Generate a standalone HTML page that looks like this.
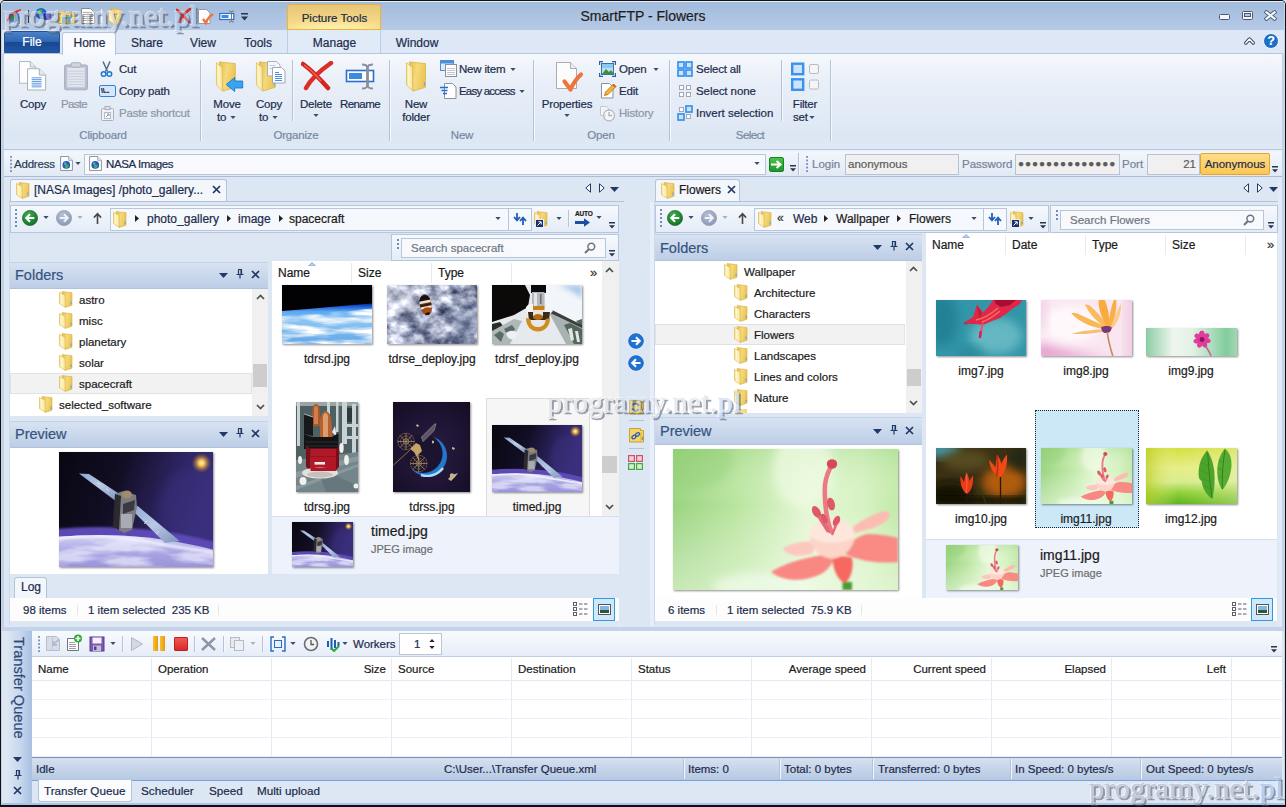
<!DOCTYPE html>
<html><head><meta charset="utf-8"><title>SmartFTP - Flowers</title>
<style>
*{box-sizing:border-box;margin:0;padding:0}
html,body{width:1286px;height:807px;overflow:hidden;background:#dde7f4}
body{font-family:"Liberation Sans",sans-serif;font-size:11.5px;color:#1c2c4c;position:relative;-webkit-text-stroke:.2px}
.k{color:#1a1a1a}
.a{position:absolute}
.t{position:absolute;white-space:nowrap;line-height:16px;height:16px}
.g{color:#8c96a6}
.c{text-align:center}
.r{text-align:right}
.gl{color:#7888a2}
.sep{position:absolute;width:1px;background:#b3c3da;box-shadow:1px 0 0 #f4f8fd}
.hd{position:absolute;background:linear-gradient(#d8e3f2,#bccde6);border-bottom:1px solid #b0c2dc;border-top:1px solid #c3d2e8}
.hd span{position:absolute;left:5px;top:3px;font-size:14.5px;color:#35537f;line-height:18px}
.wm{position:absolute;font-family:"Liberation Serif",serif;font-size:30.300px;line-height:34px;height:40px;padding:0 4px;color:#d6d7dc;-webkit-text-stroke:.4px #d6d7dc;letter-spacing:.2px;white-space:nowrap;filter:url(#wmf)}
.wm span{color:#b4cef2;-webkit-text-stroke:.4px #b4cef2}
.inp{position:absolute;background:#f0f0f0;border:1px solid #b6c2d6}
.tb{position:absolute;background:linear-gradient(#f6f9fd,#e4ecf7);border:1px solid #b7c6dc}
.wh{position:absolute;background:#fff}
.th{position:absolute;box-shadow:1px 1px 2px rgba(0,0,0,.45)}
.col{position:absolute;width:1px;background:#e6ebf3}
</style></head><body>
<svg width="0" height="0" style="position:absolute">
<defs>
<linearGradient id="fg" x1="0" y1="0" x2="1" y2="0"><stop offset="0" stop-color="#f7e08a"/><stop offset=".5" stop-color="#f3d061"/><stop offset="1" stop-color="#e2b33c"/></linearGradient>
<linearGradient id="fb" x1="0" y1="0" x2="1" y2="0"><stop offset="0" stop-color="#fbeeb0"/><stop offset="1" stop-color="#f1d678"/></linearGradient>
<linearGradient id="bf1" x1="0" y1="0" x2="1" y2="0"><stop offset="0" stop-color="#f4d878"/><stop offset=".3" stop-color="#fef6cc"/><stop offset="1" stop-color="#f8e598"/></linearGradient>
<linearGradient id="bf2" x1="0" y1="0" x2="1" y2=".3"><stop offset="0" stop-color="#e6bc48"/><stop offset=".5" stop-color="#f5d97c"/><stop offset="1" stop-color="#ecc656"/></linearGradient>
<symbol id="bfold" viewBox="0 0 21 32"><path d="M3.500 .9L20 2.600V26.900L7.400 30.800z" fill="url(#bf2)" stroke="#d9ad3c" stroke-width=".7"/><path d="M.4 1.700L6.500 6.500 6.900 30.800.5 24.300z" fill="url(#bf1)" stroke="#dcb34a" stroke-width=".7"/><rect x="18.300" y="22" width="1.200" height="3.200" fill="#5aa8ec"/></symbol>
<symbol id="fold" viewBox="0 0 14 17"><path d="M3 .6L13 1.700V14.200L6.300 16.400z" fill="url(#bf2)" stroke="#d9ad3c" stroke-width=".6"/><path d="M.4 1.400L6 4.200 6.300 16.400.5 12.600z" fill="url(#bf1)" stroke="#dcb34a" stroke-width=".6"/><rect x="11.500" y="10.500" width="1.100" height="2.600" fill="#5aa8ec"/></symbol>
<filter id="wmf" x="-2%" y="-10%" width="104%" height="130%" color-interpolation-filters="sRGB"><feOffset in="SourceAlpha" dx="1.500" dy="1.500" result="o"/><feGaussianBlur in="o" stdDeviation=".5" result="ob"/><feComposite in="ob" in2="SourceAlpha" operator="out" result="sh"/><feFlood flood-color="#4a546c" flood-opacity=".55" result="fc"/><feComposite in="fc" in2="sh" operator="in" result="shc"/><feOffset in="SourceAlpha" dx="-1" dy="-1" result="o2"/><feComposite in="o2" in2="SourceAlpha" operator="out" result="hl"/><feFlood flood-color="#ffffff" flood-opacity=".55" result="fw"/><feComposite in="fw" in2="hl" operator="in" result="hlc"/><feColorMatrix in="SourceGraphic" type="matrix" values="1 0 0 0 0 0 1 0 0 0 0 0 1 0 0 0 0 0 .5 0" result="fill"/><feMerge><feMergeNode in="shc"/><feMergeNode in="hlc"/><feMergeNode in="fill"/></feMerge></filter>
<symbol id="dd" viewBox="0 0 7 4"><path d="M0 0h7L3.5 4z" fill="#3b4d6b"/></symbol>
<symbol id="ddg" viewBox="0 0 7 4"><path d="M0 0h7L3.5 4z" fill="#a9b2c2"/></symbol>
<symbol id="ovf" viewBox="0 0 7 8"><path d="M0 0h7v1.6H0zM0 3.6h7L3.5 7.6z" fill="#27374f"/></symbol>
<symbol id="grip" viewBox="0 0 3 18"><g fill="#6b8dc4"><rect x="0" y="0" width="2" height="2"/><rect x="0" y="4" width="2" height="2"/><rect x="0" y="8" width="2" height="2"/><rect x="0" y="12" width="2" height="2"/><rect x="0" y="16" width="2" height="2"/></g></symbol>
<symbol id="pin" viewBox="0 0 8 10"><path d="M2 0.5h4M2.5 0.5v5M5.5 0.5v5M0.5 5.5h7M4 5.5v4" stroke="#1f3a66" stroke-width="1.2" fill="none"/><rect x="4.5" y="1" width="1.4" height="4.5" fill="#1f3a66"/></symbol>
<symbol id="x" viewBox="0 0 9 9"><path d="M1 1l7 7M8 1l-7 7" stroke="#1f3a66" stroke-width="1.7" fill="none"/></symbol>
<symbol id="pdd" viewBox="0 0 9 5"><path d="M0 0h9L4.5 5z" fill="#1f3a66"/></symbol>
<symbol id="sup" viewBox="0 0 9 6"><path d="M1 5l3.5-3.6L8 5" stroke="#505050" stroke-width="1.7" fill="none"/></symbol>
<symbol id="sdn" viewBox="0 0 9 6"><path d="M1 1l3.5 3.6L8 1" stroke="#505050" stroke-width="1.7" fill="none"/></symbol>
<symbol id="bc" viewBox="0 0 4 7"><path d="M0 0l4 3.5L0 7z" fill="#222"/></symbol>
<radialGradient id="gb" cx=".4" cy=".3" r=".8"><stop offset="0" stop-color="#3fae4e"/><stop offset="1" stop-color="#0c6a22"/></radialGradient>
<radialGradient id="gy" cx=".4" cy=".3" r=".8"><stop offset="0" stop-color="#b4bfd6"/><stop offset="1" stop-color="#8893b2"/></radialGradient>
<symbol id="back" viewBox="0 0 16 16"><circle cx="8" cy="8" r="7.6" fill="url(#gb)" stroke="#0b5a1d" stroke-width=".6"/><path d="M12.3 8H4.5M8 4.2L4.2 8 8 11.8" stroke="#fff" stroke-width="2" fill="none"/></symbol>
<symbol id="fwd" viewBox="0 0 16 16"><circle cx="8" cy="8" r="7.6" fill="url(#gy)" stroke="#8490ad" stroke-width=".6"/><path d="M3.7 8h7.8M8 4.2L11.8 8 8 11.8" stroke="#eef1f7" stroke-width="2" fill="none"/></symbol>
<symbol id="up" viewBox="0 0 10 13"><path d="M5 12.5V1.5M1 5.5l4-4.3 4 4.3" stroke="#4a4a4a" stroke-width="1.8" fill="none"/></symbol>
<symbol id="sync" viewBox="0 0 14 12"><path d="M4 0v6.5M1 4l3 3.4L7 4" stroke="#1f5fb8" stroke-width="1.8" fill="none"/><path d="M10 12V5.2M7 8l3-3.4 3 3.4" stroke="#1f5fb8" stroke-width="1.8" fill="none"/></symbol>
<symbol id="mag" viewBox="0 0 12 12"><circle cx="7.3" cy="4.6" r="3.4" fill="none" stroke="#6d7480" stroke-width="1.5"/><path d="M4.8 7.2L1 11" stroke="#6d7480" stroke-width="2"/></symbol>
<symbol id="globe" viewBox="0 0 12 14"><path d="M.5 .5h7.500l3.500 3.500v9.500H.5z" fill="#fff" stroke="#8a8f98" stroke-width=".9"/><path d="M8 .5v3.500h3.500" fill="#eef0f3" stroke="#8a8f98" stroke-width=".7"/><circle cx="5.800" cy="8.300" r="3.600" fill="#2458c0"/><circle cx="4.800" cy="7.200" r="1.300" fill="#7ab0f0" opacity=".7"/><path d="M4.500 9c.8-1.200 2.400-1.600 3.200-.6s-.2 2.600-1.400 2.800-2.400-1-1.800-2.200z" fill="#3fb548"/></symbol>
</defs></svg>

<!-- window frame -->
<div class="a" style="left:0;top:0;width:1286px;height:807px;background:#dde7f4;border:1px solid #101010;border-bottom-width:2px;border-radius:5px 5px 0 0"></div>
<div class="a" style="left:1px;top:1px;width:1284px;height:804px;border:3px solid #c3d3ea;border-top:1px solid #e6eef9;border-bottom:3px solid #a9c4e8;border-radius:4px 4px 0 0"></div>
<!-- title bar -->
<div class="a" style="left:2px;top:2px;width:1282px;height:28px;background:linear-gradient(#a2bbdc,#b6cae6)"></div>
<div class="t c" style="left:543px;top:6px;width:200px;font-size:14px;line-height:20px;height:20px;color:#1e1e1e">SmartFTP - Flowers</div>
<!-- picture tools -->
<div class="a" style="left:287px;top:4px;width:94px;height:26px;background:radial-gradient(ellipse 60% 45% at 50% 100%,#fff3b4,rgba(255,243,180,0) 100%),linear-gradient(#e6c67c,#f5d884 70%,#f9de8c);border:1px solid #f0b431;border-radius:3px 3px 0 0"></div>
<div class="t c" style="left:287px;top:10px;width:95px">Picture Tools</div>
<!-- window buttons -->
<div class="a" style="left:1219px;top:14px;width:11px;height:6px;border:1px solid #4a5870;border-radius:1.500px;background:#f4f7fc"></div>
<div class="a" style="left:1242px;top:11px;width:11px;height:9px;border:1px solid #4a5870;border-radius:1.500px;background:#f4f7fc"></div>
<div class="a" style="left:1244px;top:13px;width:7px;height:4px;border:1px solid #4a5870;background:#b8c8e0"></div>
<svg class="a" style="left:1264px;top:10px" width="13" height="11" viewBox="0 0 13 11"><path d="M2.500 2.300l8 6.400M10.500 2.300l-8 6.400" stroke="#4a5870" stroke-width="4" stroke-linecap="square"/><path d="M2.500 2.300l8 6.400M10.500 2.300l-8 6.400" stroke="#f4f7fc" stroke-width="2.200" stroke-linecap="square"/></svg>

<!-- tab row -->
<div class="a" style="left:2px;top:30px;width:1282px;height:24px;background:#dde7f5"></div>
<div class="a" style="left:287px;top:30px;width:94px;height:23px;background:#e1eaf7;border-left:1px solid #b9cde9;border-right:1px solid #b9cde9"></div>
<div class="a" style="left:4px;top:31px;width:56px;height:22px;background:linear-gradient(#4b82c8,#2f66b2 48%,#1a4790 52%,#2157a8);border:1px solid #234f96;border-radius:3px 3px 0 0"></div>
<div class="t c" style="left:4px;top:34px;width:56px;color:#fff;font-size:12px">File</div>
<div class="a" style="left:62px;top:32px;width:54px;height:23px;background:#f8fafd;border:1px solid #b4c6df;border-bottom:none;border-radius:3px 3px 0 0;z-index:3"></div>
<div class="t c" style="left:62px;top:35px;width:55px;font-size:12px;z-index:4">Home</div>
<div class="t c" style="left:117px;top:35px;width:60px;font-size:12px">Share</div>
<div class="t c" style="left:173px;top:35px;width:60px;font-size:12px">View</div>
<div class="t c" style="left:228px;top:35px;width:60px;font-size:12px">Tools</div>
<div class="t c" style="left:287px;top:35px;width:95px;font-size:12px">Manage</div>
<div class="t c" style="left:382px;top:35px;width:70px;font-size:12px">Window</div>
<!-- help -->
<svg class="a" style="left:1244px;top:36px" width="11" height="9" viewBox="0 0 11 9"><path d="M1.800 7L5.500 3l3.700 4" stroke="#3a4860" stroke-width="3.400" fill="none" stroke-linejoin="round" stroke-linecap="round"/><path d="M1.800 7L5.500 3l3.700 4" stroke="#fff" stroke-width="1.500" fill="none" stroke-linejoin="round" stroke-linecap="round"/></svg>
<div class="a c" style="left:1263px;top:33px;width:16px;height:16px;border-radius:8px;background:#1b6fc8;color:#fff;font-weight:bold;font-size:12.500px;line-height:14px;border:1px solid #f4f8fd;letter-spacing:0">?</div>

<!-- ribbon -->
<div class="a" style="left:3px;top:53px;width:1280px;height:97px;background:linear-gradient(#f5f8fc,#e9eff8 30%,#dde7f4 85%,#dfe8f5);border:1px solid #b4c6df;border-left-color:#c6d4e8;border-right-color:#c6d4e8"></div>
<div style="letter-spacing:-.2px">
<!-- ===== ribbon content ===== -->
<!-- Clipboard -->
<svg class="a" style="left:19px;top:61px" width="28" height="30" viewBox="0 0 31 33"><path d="M.5 .5h12l6 6v18H.5z" fill="#fdfdfe" stroke="#a9b0bc"/><path d="M12.500.5v6h6" fill="#e9edf2" stroke="#a9b0bc"/><path d="M9.500 8.500h13l7 7v16.500h-20z" fill="#fff" stroke="#a1a8b4"/><path d="M22.500 8.500v7h7" fill="#e6eaf0" stroke="#a1a8b4"/><g stroke="#4f8fe0" stroke-width="1"><path d="M14 18.500h11M14 20.500h11M14 22.500h11M14 24.500h11M14 26.500h11M14 28.500h11"/></g></svg>
<div class="t c" style="left:8px;top:96px;width:50px">Copy</div>
<svg class="a" style="left:64px;top:61px" width="24" height="31" viewBox="0 0 27 33"><rect x=".5" y="3.500" width="26" height="28" rx="2" fill="#b7bdd0" stroke="#a3aac0"/><rect x="3.500" y="6.500" width="20" height="22" fill="#e3e7ef" stroke="#c9cfdb"/><rect x="8" y="1" width="11" height="5" rx="1.500" fill="#cfd4e0" stroke="#a3aac0"/><g stroke="#c3c9d6"><path d="M5 10.500h17M5 13.500h17M5 16.500h17M5 19.500h17M5 22.500h17M5 25.500h17"/></g></svg>
<div class="t c g" style="left:49px;top:96px;width:50px;letter-spacing:-.7px">Paste</div>
<svg class="a" style="left:100px;top:61px" width="13" height="17" viewBox="0 0 13 17"><path d="M3 0.500l4.500 10M10 0.500L5.500 10.500" stroke="#5a6a80" stroke-width="1.5" fill="none"/><circle cx="3.600" cy="13" r="2.300" fill="none" stroke="#1e78d2" stroke-width="1.500"/><circle cx="9.400" cy="13" r="2.300" fill="none" stroke="#1e78d2" stroke-width="1.500"/></svg>
<div class="t" style="left:119px;top:61px">Cut</div>
<div class="a" style="left:99px;top:85px;width:17px;height:12px;background:#d4e7fb;border:1.500px solid #2f83d8;border-radius:2px"></div>
<div class="a" style="left:101px;top:86px;font-size:7px;font-weight:bold;line-height:10px;color:#223;letter-spacing:-.3px">\\...</div>
<div class="t" style="left:119px;top:83px">Copy path</div>
<svg class="a" style="left:101px;top:106px" width="13" height="15" viewBox="0 0 13 15"><rect x=".5" y="2.500" width="12" height="12" rx="1" fill="#eef0f4" stroke="#a9b0bd"/><rect x="4" y=".5" width="5" height="3" fill="#dfe3ea" stroke="#a9b0bd"/><rect x="3.500" y="6.500" width="6" height="6" fill="#fff" stroke="#b4bac6"/><path d="M5 11l3-3M6 8h2v2" stroke="#8f97a7" fill="none"/></svg>
<div class="t g" style="left:119px;top:105px">Paste shortcut</div>
<div class="t c gl" style="left:53px;top:127px;width:100px">Clipboard</div>
<div class="sep" style="left:200px;top:60px;height:81px"></div>

<!-- Organize -->
<svg class="a" style="left:215px;top:60px" width="30" height="33" viewBox="0 0 30 33"><use href="#bfold" x=".8" y="1" width="20.500" height="31.300"/><path d="M27.700 21h-8v-3.500L11.200 24.500l8.500 7V28h8z" fill="#38a4f0" stroke="#1878cc" stroke-width=".9" stroke-linejoin="round"/></svg>
<div class="t c" style="left:202px;top:96px;width:50px">Move</div>
<div class="t" style="left:217px;top:109px">to</div>
<svg class="a" style="left:230px;top:116px" width="6" height="3"><use href="#dd" width="6" height="3"/></svg>
<svg class="a" style="left:255px;top:60px" width="32" height="33" viewBox="0 0 32 33"><use href="#bfold" x=".8" y="1" width="20.500" height="31.300"/><path d="M12.500 1.500h9l3.500 3.500v11h-12.500z" fill="#f6f7f9" stroke="#a9b0bc"/><path d="M14.500 5.500h6M14.500 8.500h3" stroke="#b9cbe6"/><path d="M17.500 7.500h9l3.500 3.500v12h-12.500z" fill="#fff" stroke="#a1a8b4"/><g stroke="#4f8fe0"><path d="M20 12.500h4M20 14.500h7M20 16.500h7M20 18.500h7M20 20.500h7"/></g></svg>
<div class="t c" style="left:244px;top:96px;width:50px">Copy</div>
<div class="t" style="left:259px;top:109px">to</div>
<svg class="a" style="left:272px;top:116px" width="6" height="3"><use href="#dd" width="6" height="3"/></svg>
<div class="sep" style="left:292px;top:60px;height:61px"></div>
<svg class="a" style="left:301px;top:61px" width="33" height="30" viewBox="0 0 33 30"><path d="M2 3c7 5 17 15 25 24" stroke="#d5261c" stroke-width="4.500" stroke-linecap="round" fill="none"/><path d="M30 2C20 9 10 18 5 27" stroke="#dc2e22" stroke-width="4.500" stroke-linecap="round" fill="none"/><path d="M3 4c6 4 12 10 17 16" stroke="#f0685c" stroke-width="1.200" fill="none"/></svg>
<div class="t c" style="left:291px;top:96px;width:50px">Delete</div>
<svg class="a" style="left:313px;top:114px" width="6" height="3"><use href="#dd" width="6" height="3"/></svg>
<svg class="a" style="left:345px;top:63px" width="31" height="27" viewBox="0 0 31 27"><rect x="1.500" y="7.500" width="27" height="11" fill="#fff" stroke="#2a6fc9" stroke-width="1.600"/><rect x="4" y="10" width="13" height="6" fill="#3c8be0"/><path d="M17 1.500c3 0 5 .5 5 2.500v19c0 2-2 2.500-5 2.500M28 1.500c-3 0-5 .5-5 2.500v19c0 2 2 2.500 5 2.500" stroke="#8a8f98" stroke-width="1.800" fill="none"/></svg>
<div class="t c" style="left:335px;top:96px;width:50px;letter-spacing:-.6px">Rename</div>
<div class="t c gl" style="left:246px;top:127px;width:100px">Organize</div>
<div class="sep" style="left:389px;top:60px;height:81px"></div>

<!-- New -->
<svg class="a" style="left:406px;top:61px" width="21" height="32"><use href="#bfold" width="20.500" height="31.300"/></svg>
<div class="t c" style="left:391px;top:96px;width:50px">New</div>
<div class="t c" style="left:391px;top:109px;width:50px">folder</div>
<svg class="a" style="left:440px;top:60px" width="17" height="17" viewBox="0 0 17 17"><rect x=".5" y=".5" width="13" height="10" fill="#dbe9f8" stroke="#4b8edb"/><rect x="1" y="1" width="12" height="2.500" fill="#4b8edb"/><rect x="5.500" y="4.500" width="11" height="12" fill="#fff" stroke="#8a8f98"/><path d="M7 8.500h8M7 10.500h8M7 12.500h8M7 14.500h8" stroke="#c0c5ce"/></svg>
<div class="t" style="left:459px;top:61px">New item</div>
<svg class="a" style="left:510px;top:68px" width="6" height="3"><use href="#dd" width="6" height="3"/></svg>
<svg class="a" style="left:440px;top:82px" width="17" height="17" viewBox="0 0 17 17"><path d="M4.500 1.500h8l3.500 3.500v11.500h-11.500z" fill="#fff" stroke="#8a8f98"/><path d="M0 5.500h8M1.500 8.500h6M3 11.500h4" stroke="#1f6fd0" stroke-width="1.400"/></svg>
<div class="t" style="left:459px;top:83px;letter-spacing:-.8px">Easy access</div>
<svg class="a" style="left:519px;top:90px" width="6" height="3"><use href="#dd" width="6" height="3"/></svg>
<div class="t c gl" style="left:412px;top:127px;width:100px">New</div>
<div class="sep" style="left:533px;top:60px;height:81px"></div>

<!-- Open -->
<svg class="a" style="left:555px;top:61px" width="30" height="33" viewBox="0 0 30 33"><path d="M1.500 1.500h14l6 6v20h-20z" fill="#fcfcfd" stroke="#a9adb5"/><path d="M15.500 1.500v6h6" fill="#eceef2" stroke="#a9adb5"/><path d="M9.500 20.500l6 8c2.500-6 6-11 10.500-15" stroke="#f0733a" stroke-width="4.200" fill="none" stroke-linecap="round" stroke-linejoin="round"/></svg>
<div class="t c" style="left:537px;top:96px;width:60px">Properties</div>
<svg class="a" style="left:564px;top:114px" width="6" height="3"><use href="#dd" width="6" height="3"/></svg>
<svg class="a" style="left:599px;top:61px" width="17" height="16" viewBox="0 0 17 16"><rect x="2.500" y="2.500" width="12" height="11" fill="#bfe0f2" stroke="#3b6fb0"/><path d="M3 13l4-5 3 3 2-2 3 4z" fill="#3f8f3a"/><rect x="3" y="3" width="11" height="4" fill="#8cc8f0"/><path d="M.5 4V.5H4M13 .5h3.500V4M16.500 12v3.500H13M4 15.500H.5V12" stroke="#2d5fa8" fill="none" stroke-width="1.400"/></svg>
<div class="t" style="left:619px;top:61px">Open</div>
<svg class="a" style="left:653px;top:68px" width="6" height="3"><use href="#dd" width="6" height="3"/></svg>
<svg class="a" style="left:600px;top:82px" width="17" height="17" viewBox="0 0 17 17"><path d="M1.500 1.500h8l3.500 3.500v11h-11.500z" fill="#fff" stroke="#8a8f98"/><path d="M4.500 13.500l1-3.500L13.500 2l2.500 2.500-8 8z" fill="#f3b43a" stroke="#a86c14" stroke-width=".8"/><path d="M12.500 3l2.500 2.500 1-1L13.500 2z" fill="#e0453a"/></svg>
<div class="t" style="left:619px;top:83px">Edit</div>
<svg class="a" style="left:599px;top:105px" width="17" height="17" viewBox="0 0 17 17"><path d="M1.500 1.500h6l2 2v7h-8z" fill="#f2f4f7" stroke="#c2c7d0"/><circle cx="10" cy="10.500" r="5.500" fill="#f4f6f9" stroke="#b3b9c6" stroke-width="1.300"/><path d="M10 7v3.500h3" stroke="#aab1bf" stroke-width="1.300" fill="none"/><path d="M3 10l2 3 2-3" fill="#c5cad5"/></svg>
<div class="t g" style="left:619px;top:105px">History</div>
<div class="t c gl" style="left:551px;top:127px;width:100px">Open</div>
<div class="sep" style="left:669px;top:60px;height:81px"></div>

<!-- Select -->
<svg class="a" style="left:677px;top:61px" width="16" height="16" viewBox="0 0 16 16"><g fill="#cde3fb" stroke="#3a92ee" stroke-width="1.700"><rect x="1" y="1" width="6" height="6"/><rect x="9" y="1" width="6" height="6"/><rect x="1" y="9" width="6" height="6"/><rect x="9" y="9" width="6" height="6"/></g></svg>
<div class="t" style="left:696px;top:61px">Select all</div>
<svg class="a" style="left:677px;top:83px" width="16" height="16" viewBox="0 0 16 16"><g fill="#fdfdfd" stroke="#a3a8b2" stroke-width="1"><rect x="2.500" y="2.500" width="4" height="4"/><rect x="9.500" y="2.500" width="4" height="4"/><rect x="2.500" y="9.500" width="4" height="4"/><rect x="9.500" y="9.500" width="4" height="4"/></g></svg>
<div class="t" style="left:696px;top:83px;letter-spacing:-.08px">Select none</div>
<svg class="a" style="left:677px;top:105px" width="16" height="16" viewBox="0 0 16 16"><g fill="#fdfdfd" stroke="#a3a8b2" stroke-width="1"><rect x="2.500" y="2.500" width="4" height="4"/><rect x="9.500" y="9.500" width="4" height="4"/></g><g fill="#cde3fb" stroke="#3a92ee" stroke-width="1.700"><rect x="9" y="1" width="6" height="6"/><rect x="1" y="9" width="6" height="6"/></g></svg>
<div class="t" style="left:696px;top:105px;letter-spacing:0">Invert selection</div>
<div class="t c gl" style="left:700px;top:127px;width:100px;letter-spacing:-.6px">Select</div>
<div class="sep" style="left:781px;top:60px;height:61px"></div>

<!-- Filter set -->
<svg class="a" style="left:790px;top:61px" width="30" height="32" viewBox="0 0 30 32"><g fill="#cde3fb" stroke="#3a92ee" stroke-width="2.400"><rect x="2.200" y="2.700" width="11" height="10.500"/><rect x="2.200" y="18.300" width="11" height="10.500"/></g><g fill="#f4f5f7" stroke="#b7bbc4" stroke-width="1"><rect x="19.500" y="3.500" width="9" height="9" rx="1.500"/><rect x="19.500" y="19" width="9" height="9" rx="1.500"/></g></svg>
<div class="t c" style="left:780px;top:96px;width:50px">Filter</div>
<div class="t" style="left:793px;top:109px">set</div>
<svg class="a" style="left:809px;top:116px" width="6" height="3"><use href="#dd" width="6" height="3"/></svg>
<div class="sep" style="left:830px;top:60px;height:81px"></div>
</div>
<!-- ===== address bar ===== -->
<div class="a" style="left:4px;top:150px;width:1278px;height:27px;background:linear-gradient(#f3f7fc,#e1e9f5);border-top:2px solid #eef3fa;border-bottom:1px solid #a9bbd6"></div>
<div class="sep" style="left:798px;top:153px;height:22px"></div>
<svg class="a" style="left:10px;top:156px" width="3" height="16"><use href="#grip" width="3" height="16"/></svg>
<div class="t" style="left:14px;top:156px;color:#2b3b55;letter-spacing:-.2px">Address</div>

<svg class="a" style="left:60px;top:156px" width="13" height="15"><use href="#globe" width="13" height="15"/></svg>
<svg class="a" style="left:75px;top:162px" width="6" height="3"><use href="#dd" width="6" height="3"/></svg>
<div class="a" style="left:84px;top:154px;width:682px;height:21px;background:#f7f9fc;border:1px solid #b9c6da"></div>
<svg class="a" style="left:89px;top:156px" width="13" height="15"><use href="#globe" width="13" height="15"/></svg>
<div class="t" style="left:106px;top:156px;letter-spacing:-.4px">NASA Images</div>
<svg class="a" style="left:754px;top:162px" width="6" height="3"><use href="#dd" width="6" height="3"/></svg>
<div class="a" style="left:769px;top:157px;width:15px;height:15px;background:linear-gradient(#4cc04a,#1c9a2b);border:1px solid #178222;border-radius:2px"></div>
<svg class="a" style="left:771px;top:160px" width="11" height="9" viewBox="0 0 11 9"><path d="M0 4.500h8M5.500 1L9.500 4.500 5.500 8" stroke="#fff" stroke-width="2" fill="none"/></svg>
<svg class="a" style="left:790px;top:165px" width="6" height="7"><use href="#ovf" width="6" height="7"/></svg>
<!-- login bar -->

<svg class="a" style="left:806px;top:156px" width="3" height="16"><use href="#grip" width="3" height="16"/></svg>
<div class="t g" style="left:812px;top:156px;color:#76839a">Login</div>
<div class="inp" style="left:845px;top:154px;width:114px;height:21px"></div>
<div class="t" style="left:848px;top:156px;color:#5c5c5c">anonymous</div>
<div class="t g" style="left:962px;top:156px;color:#76839a">Password</div>
<div class="inp" style="left:1015px;top:154px;width:105px;height:21px"></div>
<div class="t" style="left:1018px;top:156px;color:#5c5c5c;font-size:10px;letter-spacing:.98px">●●●●●●●●●●●●●●</div>
<div class="t g" style="left:1122px;top:156px;color:#76839a">Port</div>
<div class="inp" style="left:1147px;top:154px;width:53px;height:21px"></div>
<div class="t r" style="left:1147px;top:156px;width:49px;color:#5c5c5c">21</div>
<div class="a" style="left:1200px;top:153px;width:70px;height:22px;background:linear-gradient(#fddc8a,#fbc754);border:1px solid #e6a52a;border-radius:2px"></div>
<div class="t c" style="left:1200px;top:156px;width:70px">Anonymous</div>
<svg class="a" style="left:1272px;top:166px" width="6" height="7"><use href="#ovf" width="6" height="7"/></svg>

<!-- ===== doc tabs ===== -->
<div class="a" style="left:10px;top:179px;width:217px;height:23px;background:#f3f6fb;border:1px solid #b5c3d8;border-bottom:none;border-radius:3px 3px 0 0"></div>
<svg class="a" style="left:16px;top:182px" width="14" height="17"><use href="#fold" width="14" height="17"/></svg>
<div class="t" style="left:34px;top:182px;font-size:12px">[NASA Images] /photo_gallery...</div>
<svg class="a" style="left:212px;top:185px" width="9" height="9"><use href="#x" width="9" height="9"/></svg>
<svg class="a" style="left:585px;top:183px" width="6" height="10" viewBox="0 0 6 10"><path d="M5.500 .8v8.400L.8 5z" fill="#fff" stroke="#1f3a66" stroke-width="1"/></svg>
<svg class="a" style="left:599px;top:183px" width="6" height="10" viewBox="0 0 6 10"><path d="M.5 .8v8.400L5.200 5z" fill="#fff" stroke="#1f3a66" stroke-width="1"/></svg>
<svg class="a" style="left:610px;top:187px" width="9" height="5"><use href="#pdd" width="9" height="5"/></svg>
<div class="a" style="left:655px;top:179px;width:85px;height:23px;background:#f3f6fb;border:1px solid #b5c3d8;border-bottom:none;border-radius:3px 3px 0 0"></div>
<svg class="a" style="left:661px;top:182px" width="14" height="17"><use href="#fold" width="14" height="17"/></svg>
<div class="t k" style="left:679px;top:182px;font-size:12px">Flowers</div>
<svg class="a" style="left:727px;top:185px" width="9" height="9"><use href="#x" width="9" height="9"/></svg>
<svg class="a" style="left:1243px;top:183px" width="6" height="10" viewBox="0 0 6 10"><path d="M5.500 .8v8.400L.8 5z" fill="#fff" stroke="#1f3a66" stroke-width="1"/></svg>
<svg class="a" style="left:1257px;top:183px" width="6" height="10" viewBox="0 0 6 10"><path d="M.5 .8v8.400L5.200 5z" fill="#fff" stroke="#1f3a66" stroke-width="1"/></svg>
<svg class="a" style="left:1269px;top:187px" width="9" height="5"><use href="#pdd" width="9" height="5"/></svg>

<!-- ===== left pane ===== -->
<div class="a" style="left:619px;top:202px;width:4px;height:424px;background:#e6eef9"></div><div class="a" style="left:650px;top:202px;width:4px;height:424px;background:#e6eef9"></div>
<div class="a" style="left:9px;top:201px;width:615px;height:424px;background:#dde7f4;border-top:1px solid #b5c3d8;border-left:1px solid #cdd9ea"></div>
<!-- toolbar -->
<div class="tb" style="left:10px;top:205px;width:609px;height:28px"></div>
<svg class="a" style="left:15px;top:209px" width="3" height="18"><use href="#grip" width="3" height="18"/></svg>
<svg class="a" style="left:22px;top:210px" width="16" height="16"><use href="#back" width="16" height="16"/></svg>
<svg class="a" style="left:43px;top:216px" width="6" height="3"><use href="#dd" width="6" height="3"/></svg>
<svg class="a" style="left:56px;top:210px" width="16" height="16"><use href="#fwd" width="16" height="16"/></svg>
<svg class="a" style="left:77px;top:216px" width="6" height="3"><use href="#ddg" width="6" height="3"/></svg>
<svg class="a" style="left:93px;top:212px" width="9" height="13"><use href="#up" width="9" height="13"/></svg>
<div class="a" style="left:110px;top:208px;width:399px;height:23px;background:#f5f8fc;border:1px solid #b9c6da"></div>
<svg class="a" style="left:113px;top:211px" width="14" height="17"><use href="#fold" width="14" height="17"/></svg>
<svg class="a" style="left:135px;top:215px" width="4" height="7"><use href="#bc" width="4" height="7"/></svg>
<div class="t" style="left:147px;top:211px;font-size:12px">photo_gallery</div>
<svg class="a" style="left:227px;top:215px" width="4" height="7"><use href="#bc" width="4" height="7"/></svg>
<div class="t" style="left:238px;top:211px;font-size:12px">image</div>
<svg class="a" style="left:279px;top:215px" width="4" height="7"><use href="#bc" width="4" height="7"/></svg>
<div class="t k" style="left:289px;top:211px;font-size:12px">spacecraft</div>
<svg class="a" style="left:495px;top:217px" width="6" height="3"><use href="#dd" width="6" height="3"/></svg>
<div class="a" style="left:508px;top:208px;width:24px;height:23px;background:#f5f8fc;border:1px solid #b9c6da"></div>
<svg class="a" style="left:513px;top:213px" width="14" height="12"><use href="#sync" width="14" height="12"/></svg>
<svg class="a" style="left:534px;top:211px" width="14" height="17"><use href="#fold" width="14" height="17"/></svg>
<div class="a" style="left:535px;top:219px;width:9px;height:9px;background:#1d2f6a;border:1px solid #e8ecf5"></div>
<svg class="a" style="left:537px;top:221px" width="5" height="5" viewBox="0 0 5 5"><path d="M.5 4.500L4 1M1.500 .8H4.200V3.500" stroke="#fff" fill="none"/></svg>
<svg class="a" style="left:556px;top:217px" width="6" height="3"><use href="#dd" width="6" height="3"/></svg>
<div class="sep" style="left:568px;top:210px;height:17px"></div>
<div class="a" style="left:575px;top:210px;font-size:6.500px;font-weight:bold;line-height:8px;color:#222;letter-spacing:-.2px">AUTO</div>
<svg class="a" style="left:575px;top:218px" width="16" height="9" viewBox="0 0 16 9"><path d="M0 3h9V.3L15 4.500 9 8.700V6H0z" fill="#1d4fa0"/></svg>
<svg class="a" style="left:596px;top:216px" width="6" height="3"><use href="#dd" width="6" height="3"/></svg>
<svg class="a" style="left:609px;top:222px" width="6" height="7"><use href="#ovf" width="6" height="7"/></svg>
<!-- search row -->
<div class="tb" style="left:391px;top:234px;width:228px;height:27px"></div>
<svg class="a" style="left:397px;top:239px" width="3" height="10"><use href="#grip" width="3" height="18"/></svg>
<div class="a" style="left:401px;top:238px;width:205px;height:20px;background:#f7f9fc;border:1px solid #b9c6da"></div>
<div class="t" style="left:411px;top:240px;color:#6e7684">Search spacecraft</div>
<svg class="a" style="left:584px;top:242px" width="12" height="12"><use href="#mag" width="12" height="12"/></svg>
<svg class="a" style="left:609px;top:250px" width="6" height="7"><use href="#ovf" width="6" height="7"/></svg>

<!-- folders panel (left) -->
<div class="hd" style="left:10px;top:262px;width:258px;height:27px"><span>Folders</span></div>
<svg class="a" style="left:219px;top:273px" width="9" height="5"><use href="#pdd" width="9" height="5"/></svg>
<svg class="a" style="left:236px;top:269px" width="8" height="10"><use href="#pin" width="8" height="10"/></svg>
<svg class="a" style="left:251px;top:270px" width="9" height="9"><use href="#x" width="9" height="9"/></svg>
<div class="wh" style="left:10px;top:289px;width:258px;height:127px"></div>
<div class="a" style="left:10px;top:373px;width:242px;height:21px;background:#f2f2f2;border:1px solid #e2e2e2"></div>
<svg class="a" style="left:59px;top:291px" width="14" height="17"><use href="#fold" width="14" height="17"/></svg><div class="t k" style="left:79px;top:292px">astro</div>
<svg class="a" style="left:59px;top:312px" width="14" height="17"><use href="#fold" width="14" height="17"/></svg><div class="t k" style="left:79px;top:313px">misc</div>
<svg class="a" style="left:59px;top:333px" width="14" height="17"><use href="#fold" width="14" height="17"/></svg><div class="t k" style="left:79px;top:334px">planetary</div>
<svg class="a" style="left:59px;top:354px" width="14" height="17"><use href="#fold" width="14" height="17"/></svg><div class="t k" style="left:79px;top:355px">solar</div>
<svg class="a" style="left:59px;top:375px" width="14" height="17"><use href="#fold" width="14" height="17"/></svg><div class="t k" style="left:79px;top:376px">spacecraft</div>
<svg class="a" style="left:39px;top:396px" width="14" height="17"><use href="#fold" width="14" height="17"/></svg><div class="t k" style="left:59px;top:397px">selected_software</div>
<div class="a" style="left:252px;top:289px;width:16px;height:127px;background:#f0f0f0"></div>
<svg class="a" style="left:256px;top:294px" width="9" height="6"><use href="#sup" width="9" height="6"/></svg>
<div class="a" style="left:253px;top:364px;width:14px;height:23px;background:#cdcdcd"></div>
<svg class="a" style="left:256px;top:404px" width="9" height="6"><use href="#sdn" width="9" height="6"/></svg>

<!-- preview panel (left) -->
<div class="hd" style="left:10px;top:421px;width:258px;height:27px"><span>Preview</span></div>
<svg class="a" style="left:219px;top:432px" width="9" height="5"><use href="#pdd" width="9" height="5"/></svg>
<svg class="a" style="left:236px;top:428px" width="8" height="10"><use href="#pin" width="8" height="10"/></svg>
<svg class="a" style="left:251px;top:429px" width="9" height="9"><use href="#x" width="9" height="9"/></svg>
<div class="wh" style="left:10px;top:448px;width:258px;height:126px"></div>
<!-- ===== image symbols ===== -->
<svg width="0" height="0" style="position:absolute"><defs>
<filter id="b0" x="-10%" y="-10%" width="120%" height="120%"><feGaussianBlur stdDeviation=".6"/></filter>
<filter id="cl1" x="0" y="0" width="100%" height="100%" color-interpolation-filters="sRGB"><feTurbulence type="fractalNoise" baseFrequency=".06 .08" numOctaves="4" seed="7"/><feColorMatrix type="matrix" values="1.600 0 0 0 -.17  1.550 0 0 0 -.12  1.400 0 0 0 .05  0 0 0 0 1"/></filter>
<filter id="cl2" x="0" y="0" width="100%" height="100%" color-interpolation-filters="sRGB"><feTurbulence type="fractalNoise" baseFrequency=".025 .16" numOctaves="3" seed="4"/><feColorMatrix type="matrix" values="0 0 0 0 1  0 0 0 0 1  0 0 0 0 1  2.800 0 0 0 -.95"/></filter>
<filter id="cl3" x="0" y="0" width="100%" height="100%" color-interpolation-filters="sRGB"><feTurbulence type="fractalNoise" baseFrequency=".022 .09" numOctaves="3" seed="11"/><feColorMatrix type="matrix" values="0 0 0 0 .96  0 0 0 0 .96  0 0 0 0 1  3.200 0 0 0 -1.150"/></filter>
<filter id="b1" x="-10%" y="-10%" width="120%" height="120%"><feGaussianBlur stdDeviation="1.200"/></filter>
<filter id="b2" x="-10%" y="-10%" width="120%" height="120%"><feGaussianBlur stdDeviation="2.500"/></filter>
<filter id="b4" x="-20%" y="-20%" width="140%" height="140%"><feGaussianBlur stdDeviation="5"/></filter>
<linearGradient id="tmbg" x1="0" y1="0" x2="1" y2=".25"><stop offset="0" stop-color="#0a0712"/><stop offset=".42" stop-color="#120e24"/><stop offset=".75" stop-color="#2c2460"/><stop offset="1" stop-color="#382e78"/></linearGradient>
<radialGradient id="tmsun"><stop offset="0" stop-color="#fff7c8"/><stop offset=".3" stop-color="#f4c050"/><stop offset="1" stop-color="#a0602a" stop-opacity="0"/></radialGradient>
<linearGradient id="tmearth" x1="0" y1="0" x2="0" y2="1"><stop offset="0" stop-color="#d0d0f4"/><stop offset=".06" stop-color="#a8a4e2"/><stop offset=".18" stop-color="#847cd0"/><stop offset="1" stop-color="#7068bc"/></linearGradient>
<linearGradient id="tmpan" x1="0" y1="0" x2="1" y2="1"><stop offset="0" stop-color="#8fa8d0"/><stop offset=".5" stop-color="#b8c8e4"/><stop offset="1" stop-color="#7e94be"/></linearGradient>
<symbol id="timed" viewBox="0 0 154 115" preserveAspectRatio="none">
<rect width="154" height="115" fill="url(#tmbg)"/>
<ellipse cx="140" cy="55" rx="40" ry="40" fill="#3c3284" opacity=".4" filter="url(#b4)"/>
<circle cx="142.500" cy="11" r="10" fill="url(#tmsun)"/>
<ellipse cx="40" cy="232" rx="272" ry="157" fill="#5c4ab4" filter="url(#b1)"/>
<ellipse cx="40" cy="232" rx="262" ry="149" fill="url(#tmearth)"/>
<clipPath id="cpe"><ellipse cx="40" cy="232" rx="262" ry="149"/></clipPath><g clip-path="url(#cpe)"><rect x="0" y="80" width="154" height="35" filter="url(#cl3)" opacity=".62"/><path d="M0 86c30-4 60-2 90 4s50 8 64 10" stroke="#f2f2fe" stroke-width="3" fill="none" filter="url(#b1)" opacity=".85"/></g>
<path d="M20 21.500l10 .5 29 19-3 7.500z" fill="url(#tmpan)"/>
<path d="M70 55l8.700-1 42 35-14.700 2z" fill="url(#tmpan)"/>
<path d="M38 30.500l3 2M47 36.500l3 2.500M88 69l-3 3M100 79l-3 3" stroke="#e8eef8" stroke-width=".8"/>
<path d="M56 42l8-3 13 4 1 12-5 23-8 3-9-5 1-20z" fill="#7c7a82"/>
<path d="M56 42l6 2-2 34-6-3 1-20z" fill="#2c2a30"/>
<path d="M64 52l12-4-1 10-11 4z" fill="#3a3840"/>
<ellipse cx="68" cy="42.500" rx="5" ry="4" fill="#a08c68"/>
<rect x="62" y="62" width="11" height="14" fill="#aaaab4"/>
</symbol>

<linearGradient id="e1" x1="0" y1="0" x2="0" y2="1"><stop offset="0" stop-color="#0a2a90"/><stop offset=".08" stop-color="#1c5fd8"/><stop offset=".2" stop-color="#5aa8f0"/><stop offset=".45" stop-color="#8cc4f2"/><stop offset="1" stop-color="#62a6e6"/></linearGradient>
<symbol id="tdrsd" viewBox="0 0 90 59" preserveAspectRatio="none">
<rect width="90" height="59" fill="#020204"/>
<path d="M0 26C30 24 60 20.500 90 18.500V59H0z" fill="url(#e1)"/>
<clipPath id="cpd"><path d="M0 31C30 29 60 25.500 90 23.500V59H0z"/></clipPath>
<g clip-path="url(#cpd)"><rect width="90" height="59" filter="url(#cl2)"/></g>
</symbol>

<symbol id="tdrse" viewBox="0 0 90 59" preserveAspectRatio="none">
<rect width="90" height="59" fill="#8c9dba" filter="url(#cl1)"/>
<ellipse cx="14" cy="14" rx="18" ry="14" fill="#fff" opacity=".35" filter="url(#b4)"/>
<ellipse cx="78" cy="36" rx="14" ry="18" fill="#243860" opacity=".35" filter="url(#b4)"/>
<g transform="rotate(-12 38.700 19.700)"><ellipse cx="38.700" cy="19.700" rx="5.800" ry="10.500" fill="#6a3010"/><path d="M33 16a5.800 7 0 0 1 11.400 0z" fill="#18120e"/><rect x="33" y="15.500" width="11.400" height="2.600" fill="#e8e4dc"/><rect x="33" y="19.200" width="11.400" height="1.600" fill="#2a1a10"/><rect x="33.200" y="21.500" width="11" height="2.200" fill="#f0e8dc"/><ellipse cx="38.700" cy="26" rx="4.500" ry="3.500" fill="#a84c14"/><ellipse cx="38.700" cy="29" rx="2.500" ry="1.300" fill="#20120a"/></g>
</symbol>

<symbol id="tdrsf" viewBox="0 0 90 59" preserveAspectRatio="none">
<rect width="90" height="59" fill="#e6e9ee"/>
<path d="M52 0h38v42L54 24z" fill="#f2f5f9"/>
<path d="M66 0h24v14c-6-6-14-10-24-14z" fill="#a9c8ea" filter="url(#b2)"/>
<path d="M0 0h33l5 10-2 12-14 8L0 37z" fill="#0c0a08"/>
<path d="M0 39l8-2 4 5-12 9z" fill="#2a2e22"/>
<path d="M0 46l22-12 8 2-12 23H0z" fill="#aeb8b8"/>
<path d="M2 50l6-4 4 3-3 8zM12 44l8-4 3 4-6 9z" fill="#5c6c64"/>
<path d="M14 48c4-3 8-3 12 0l-3 6c-4 1-8 0-9-6z" fill="#eef0f2"/>
<path d="M56 26l10 6 24 10v17H74z" fill="#a8b2b0"/>
<path d="M72 40l6-2 12 6v15h-8zM84 36l6-2v8z" fill="#54665c"/>
<path d="M76 44l4-1 2 12-3 1zM83 46l3 0 2 11-3 0z" fill="#dfe6e4"/>
<path d="M54 22l36 18v3L56 27z" fill="#3a3e3a"/>
<rect x="39" y="0" width="15" height="8" fill="#0a0a0a"/>
<rect x="40" y="7" width="12.500" height="14.500" fill="#b4b8bc"/><rect x="42" y="8" width="3" height="13" fill="#e4e6e8"/><rect x="48" y="9" width="1.500" height="10" fill="#6c7074"/>
<rect x="40" y="21" width="12.500" height="4" fill="#c8821a"/>
<path d="M34 22c2-3 5-4 7-3v8l-6 3zM53 20c3 0 6 2 8 6l-4 4-4-3z" fill="#f4f4f4"/>
<path d="M36 27h22l-1 8H37z" fill="#3a2a1a"/><rect x="41" y="26" width="10" height="5" fill="#e8e4dc"/><ellipse cx="46" cy="32" rx="5" ry="3" fill="#b46c14"/>
<path d="M34 33c0 8 5 13.500 12 13.500S58 41 58 33l-4.500 1c0 5-3 8-7.500 8s-7.500-3-7.500-8z" fill="#d08c1c"/>
<path d="M39.500 36c1 3 3.500 5 6.500 5s5.500-2 6.500-5" stroke="#e8e6e2" stroke-width="2" fill="none"/>
</symbol>

<symbol id="tdrsg" viewBox="0 0 62 90" preserveAspectRatio="none">
<rect width="62" height="90" fill="#4e6062"/>
<rect x="0" y="0" width="62" height="4" fill="#9aa6a6"/>
<g fill="#c9d2d4"><rect x="1" y="0" width="3" height="44"/><rect x="31" y="0" width="3" height="12"/><rect x="46" y="0" width="5" height="42"/><rect x="40" y="0" width="2.500" height="30"/><rect x="56" y="2" width="4" height="60"/><path d="M46 22h16v3H46zM50 34h12v3H50z"/></g>
<rect x="51" y="6" width="5" height="14" fill="#2c3a3c"/>
<path d="M0 58l62-8v40H0z" fill="#74868a"/>
<path d="M0 70l62-16v5L0 76zM0 84l62-22v3L0 88z" fill="#8e9ea2" opacity=".8"/>
<path d="M20 64l42 20v6H30z" fill="#5e7074" opacity=".6"/>
<path d="M16 10c0-10 8-11 8 0l1 14h-9z" fill="#a8562a"/><path d="M18 6c1-3 3-3 4 0v16h-4z" fill="#cc8050"/>
<path d="M24 22c0-17 11.500-17 11.500 0l1 15H24z" fill="#b4622e"/><path d="M27 14c1-4 4-4 5 0v22h-5z" fill="#dc9c70"/>
<path d="M8 12l9 3v19l-9-2z" fill="#16181a"/><path d="M8 12l9 3" stroke="#c8ccd0" stroke-width=".8"/>
<path d="M36 30l3-6 2 12z" fill="#e8e8e8"/>
<path d="M8 32l8 3h20l6.500-4v16H8z" fill="#141416"/><path d="M9 40h33M9 44h33" stroke="#3c3c40" stroke-width=".6"/>
<path d="M14.500 46.500H40v22H14.500z" fill="#b01828"/><path d="M10 44l4.500 2.500v22L10 65zM40 46.500l3-2v20l-3 4z" fill="#7c0e1c"/>
<path d="M14.500 54.500H40" stroke="#8c1020" stroke-width=".7"/>
<rect x="18.500" y="60" width="10.500" height="2.600" fill="#f4e8e8"/>
<ellipse cx="24" cy="71" rx="18" ry="5.500" fill="#e4e0dc"/><path d="M14.500 66h25.500v3H14.500z" fill="#b01828"/>
<ellipse cx="24" cy="72.500" rx="13" ry="3" fill="#c4c0bc"/>
<g fill="#f0f0ec"><ellipse cx="45.500" cy="46" rx="2.200" ry="5"/><ellipse cx="50.500" cy="58" rx="2.400" ry="5"/><ellipse cx="7" cy="79" rx="3.500" ry="4"/><ellipse cx="4" cy="58" rx="2" ry="4"/><circle cx="60" cy="84" r="2.500"/></g>
</symbol>

<radialGradient id="ssbg" cx=".5" cy=".55" r=".7"><stop offset="0" stop-color="#2a1c44"/><stop offset="1" stop-color="#150e26"/></radialGradient>
<symbol id="tdrss" viewBox="0 0 77 90" preserveAspectRatio="none">
<rect width="77" height="90" fill="url(#ssbg)"/>
<circle cx="34" cy="54" r="20" fill="#2478cc"/>
<path d="M50 66A20 20 0 0 1 28 73" stroke="#a8dcf8" stroke-width="2.600" fill="none" filter="url(#b0)"/>
<circle cx="30.300" cy="51.600" r="19.300" fill="#1b1330"/>
<g stroke="#b89860" fill="none" stroke-width=".7"><circle cx="13" cy="39.500" r="8.200" stroke-dasharray="1.200 .8"/><circle cx="13" cy="39.500" r="5.500" stroke-dasharray="1 .9"/><circle cx="13" cy="39.500" r="2.800"/><path d="M13 31v17M4.500 39.500h17M7 33.500l12 12M19 33.500l-12 12"/>
<circle cx="25.700" cy="61.500" r="8.200" stroke-dasharray="1.200 .8"/><circle cx="25.700" cy="61.500" r="5.500" stroke-dasharray="1 .9"/><circle cx="25.700" cy="61.500" r="2.800"/><path d="M25.700 53v17M17.200 61.500h17M19.700 55.500l12 12M31.700 55.500l-12 12"/>
<path d="M.5 63L17 48M28 36L42.500 22"/></g>
<path d="M28.500 35L41 22.500l2-.7-2 7-11 11z" fill="#5c5468" stroke="#a89c88" stroke-width=".5"/>
<path d="M17 47l6-6 4 2 2 6-5 5-3-4z" fill="#c4a468"/><path d="M22 50l4 8" stroke="#c4a468" stroke-width="1.200"/>
<g fill="#c8b48c"><path d="M24 22l2 1.500-1 1.500-2-1zM39 38.500l2 .5 0 2-2 .5zM59 45l3 1-1 2-2-1z"/><path d="M55 77l4-4 6-2-3 4-4 4z"/><circle cx="59" cy="73.500" r="2.200"/></g>
</symbol>
</defs></svg>

<!-- ===== left file list ===== -->
<div class="wh" style="left:272px;top:261px;width:347px;height:255px"></div>
<div class="col" style="left:351px;top:263px;height:20px"></div>
<div class="col" style="left:431px;top:263px;height:20px"></div>
<div class="col" style="left:511px;top:263px;height:20px"></div>
<div class="t k" style="left:278px;top:265px;font-size:12px">Name</div>
<svg class="a" style="left:308px;top:262px" width="8" height="4" viewBox="0 0 8 4"><path d="M.5 3.800L4 .6 7.500 3.800z" fill="#bcd2ee" stroke="#7a9cd0" stroke-width=".8"/></svg>
<div class="t k" style="left:358px;top:265px;font-size:12px">Size</div>
<div class="t k" style="left:438px;top:265px;font-size:12px">Type</div>
<div class="t" style="left:590px;top:265px;color:#333;font-size:13px">»</div>
<div class="a" style="left:602px;top:261px;width:17px;height:255px;background:#f0f0f0"></div>
<svg class="a" style="left:605px;top:267px" width="9" height="6"><use href="#sup" width="9" height="6"/></svg>
<div class="a" style="left:602px;top:456px;width:15px;height:17px;background:#cdcdcd"></div>
<svg class="a" style="left:605px;top:504px" width="9" height="6"><use href="#sdn" width="9" height="6"/></svg>
<svg class="th" style="left:282px;top:285px" width="90" height="59"><use href="#tdrsd" width="90" height="59"/></svg>
<svg class="th" style="left:387px;top:285px" width="90" height="59"><use href="#tdrse" width="90" height="59"/></svg>
<svg class="th" style="left:492px;top:285px" width="90" height="59"><use href="#tdrsf" width="90" height="59"/></svg>
<div class="t c k" style="left:277px;top:351px;width:100px;font-size:12px">tdrsd.jpg</div>
<div class="t c k" style="left:382px;top:351px;width:100px;font-size:12px">tdrse_deploy.jpg</div>
<div class="t c k" style="left:487px;top:351px;width:100px;font-size:12px">tdrsf_deploy.jpg</div>
<div class="a" style="left:486px;top:398px;width:104px;height:119px;background:#f6f6f6;border:1px solid #dcdcdc"></div>
<svg class="th" style="left:296px;top:402px" width="62" height="90"><use href="#tdrsg" width="62" height="90"/></svg>
<svg class="th" style="left:393px;top:402px" width="77" height="90"><use href="#tdrss" width="77" height="90"/></svg>
<svg class="th" style="left:492px;top:425px" width="90" height="67"><use href="#timed" width="90" height="67"/></svg>
<div class="t c k" style="left:277px;top:499px;width:100px;font-size:12px">tdrsg.jpg</div>
<div class="t c k" style="left:382px;top:499px;width:100px;font-size:12px">tdrss.jpg</div>
<div class="t c k" style="left:487px;top:499px;width:100px;font-size:12px">timed.jpg</div>
<!-- details -->
<div class="a" style="left:272px;top:516px;width:347px;height:58px;background:#eef2fb;border-top:1px solid #d3deef"></div>
<svg class="th" style="left:292px;top:522px" width="61" height="45"><use href="#timed" width="61" height="45"/></svg>
<div class="t k" style="left:371px;top:522px;font-size:14px;line-height:18px;height:18px">timed.jpg</div>
<div class="t" style="left:371px;top:541px;font-size:11px;color:#6d6d6d">JPEG image</div>
<!-- preview image left -->
<svg class="th" style="left:59px;top:452px" width="154" height="115"><use href="#timed" width="154" height="115"/></svg>
<!-- log tab + status -->
<div class="a" style="left:14px;top:577px;width:33px;height:22px;background:#f3f6fb;border:1px solid #b5c3d8;border-bottom:none;border-radius:3px 3px 0 0"></div>
<div class="t" style="left:21px;top:579px;font-size:12px">Log</div>
<div class="wh" style="left:10px;top:598px;width:609px;height:23px;background:#fdfdfe"></div>
<div class="t" style="left:23px;top:602px">98 items</div>
<div class="col" style="left:77px;top:605px;height:10px;background:#e3e6ec"></div>
<div class="t" style="left:88px;top:602px">1 item selected&nbsp; 235 KB</div>
<div class="col" style="left:218px;top:605px;height:10px;background:#e3e6ec"></div>
<svg class="a" style="left:573px;top:602px" width="16" height="14" viewBox="0 0 16 14"><g fill="none" stroke="#5a5f6a" stroke-width="1"><rect x=".5" y=".5" width="3" height="3"/><rect x=".5" y="5.500" width="3" height="3"/><rect x=".5" y="10.500" width="3" height="3"/><path d="M6 2h9M6 7h9M6 12h9" stroke-dasharray="3.500 1.500"/></g></svg>
<div class="a" style="left:593px;top:598px;width:22px;height:23px;background:#cfe8fa;border:1px solid #2f9ae0"></div>
<div class="a" style="left:598px;top:604px;width:13px;height:11px;background:#fff;border:1px solid #555"></div>
<div class="a" style="left:600px;top:606px;width:9px;height:7px;background:linear-gradient(#7fb8e8 50%,#2a5a30 50%)"></div>
<!-- ===== middle strip ===== -->
<svg class="a" style="left:628px;top:333px" width="16" height="16" viewBox="0 0 16 16"><circle cx="8" cy="8" r="7.300" fill="#1d72d6" stroke="#1458b4" stroke-width=".8"/><path d="M3.500 8h8M8 4.200L11.800 8 8 11.800" stroke="#fff" stroke-width="2" fill="none"/></svg>
<svg class="a" style="left:628px;top:355px" width="16" height="16" viewBox="0 0 16 16"><circle cx="8" cy="8" r="7.300" fill="#1d72d6" stroke="#1458b4" stroke-width=".8"/><path d="M12.500 8h-8M8 4.200L4.200 8 8 11.800" stroke="#fff" stroke-width="2" fill="none"/></svg>
<svg class="a" style="left:629px;top:399px" width="16" height="16" viewBox="0 0 16 16"><path d="M.5 1.500h11v2h3v11.500H.5z" fill="#f3d568" stroke="#c9a030"/><path d="M12 5.500v8" stroke="#e2b840" stroke-width="1.500"/><rect x="13" y="10" width="1.200" height="3" fill="#4a98e8"/><path d="M3.500 6.500c1-2.500 5-2.500 6 0M9.500 10c-1 2.500-5 2.500-6 0" stroke="#1f5fd0" stroke-width="1.700" fill="none"/><path d="M8 7.500l2.500-.5-.5-2.500zM5 9l-2.500.5.500 2.500z" fill="#1f5fd0"/></svg>
<div class="a" style="left:629px;top:420px;width:15px;height:1px;background:#b3c3da"></div>
<svg class="a" style="left:629px;top:427px" width="16" height="16" viewBox="0 0 16 16"><path d="M.5 1.500h11v2h3v11.500H.5z" fill="#f3d568" stroke="#c9a030"/><path d="M12 5.500v8" stroke="#e2b840" stroke-width="1.500"/><rect x="13" y="10" width="1.200" height="3" fill="#4a98e8"/><ellipse cx="5" cy="10" rx="2.200" ry="1.600" transform="rotate(-35 5 10)" fill="none" stroke="#2a5ab8" stroke-width="1.300"/><ellipse cx="8.500" cy="7.500" rx="2.200" ry="1.600" transform="rotate(-35 8.500 7.500)" fill="none" stroke="#2a5ab8" stroke-width="1.300"/></svg>
<div class="a" style="left:629px;top:448px;width:15px;height:1px;background:#b3c3da"></div>
<svg class="a" style="left:628px;top:455px" width="15" height="15" viewBox="0 0 15 15"><g stroke-width="1.200"><rect x=".6" y=".6" width="5.800" height="5.800" fill="#f6d0d8" stroke="#d0506c"/><rect x="8.600" y=".6" width="5.800" height="5.800" fill="#f6d0d8" stroke="#d0506c"/><rect x=".6" y="8.600" width="5.800" height="5.800" fill="#d4f0d0" stroke="#44a83c"/><rect x="8.600" y="8.600" width="5.800" height="5.800" fill="#d4f0d0" stroke="#44a83c"/></g></svg>

<!-- ===== right pane ===== -->
<div class="a" style="left:654px;top:201px;width:628px;height:424px;background:#dde7f4;border-top:1px solid #b5c3d8;border-left:1px solid #cdd9ea"></div>
<div class="a" style="left:1278px;top:178px;width:4px;height:448px;background:#e2eaf6"></div>
<div class="tb" style="left:655px;top:205px;width:394px;height:28px"></div>
<div class="tb" style="left:1050px;top:205px;width:228px;height:28px"></div>
<svg class="a" style="left:660px;top:209px" width="3" height="18"><use href="#grip" width="3" height="18"/></svg>
<svg class="a" style="left:667px;top:210px" width="16" height="16"><use href="#back" width="16" height="16"/></svg>
<svg class="a" style="left:688px;top:216px" width="6" height="3"><use href="#dd" width="6" height="3"/></svg>
<svg class="a" style="left:701px;top:210px" width="16" height="16"><use href="#fwd" width="16" height="16"/></svg>
<svg class="a" style="left:722px;top:216px" width="6" height="3"><use href="#ddg" width="6" height="3"/></svg>
<svg class="a" style="left:738px;top:212px" width="9" height="13"><use href="#up" width="9" height="13"/></svg>
<div class="a" style="left:754px;top:208px;width:230px;height:23px;background:#f5f8fc;border:1px solid #b9c6da"></div>
<svg class="a" style="left:758px;top:211px" width="14" height="17"><use href="#fold" width="14" height="17"/></svg>
<div class="t" style="left:777px;top:210px;font-size:12px;color:#333">«</div>
<div class="t" style="left:793px;top:211px;font-size:12px">Web</div>
<svg class="a" style="left:824px;top:215px" width="4" height="7"><use href="#bc" width="4" height="7"/></svg>
<div class="t k" style="left:836px;top:211px;font-size:12px">Wallpaper</div>
<svg class="a" style="left:897px;top:215px" width="4" height="7"><use href="#bc" width="4" height="7"/></svg>
<div class="t k" style="left:909px;top:211px;font-size:12px">Flowers</div>
<svg class="a" style="left:971px;top:217px" width="6" height="3"><use href="#dd" width="6" height="3"/></svg>
<div class="a" style="left:983px;top:208px;width:24px;height:23px;background:#f5f8fc;border:1px solid #b9c6da"></div>
<svg class="a" style="left:988px;top:213px" width="14" height="12"><use href="#sync" width="14" height="12"/></svg>
<svg class="a" style="left:1010px;top:211px" width="14" height="17"><use href="#fold" width="14" height="17"/></svg>
<div class="a" style="left:1011px;top:219px;width:9px;height:9px;background:#1d2f6a;border:1px solid #e8ecf5"></div>
<svg class="a" style="left:1013px;top:221px" width="5" height="5" viewBox="0 0 5 5"><path d="M.5 4.500L4 1M1.500 .8H4.200V3.500" stroke="#fff" fill="none"/></svg>
<svg class="a" style="left:1028px;top:217px" width="6" height="3"><use href="#dd" width="6" height="3"/></svg>
<svg class="a" style="left:1040px;top:222px" width="6" height="7"><use href="#ovf" width="6" height="7"/></svg>
<svg class="a" style="left:1056px;top:210px" width="3" height="10"><use href="#grip" width="3" height="18"/></svg>
<div class="a" style="left:1060px;top:210px;width:204px;height:20px;background:#f7f9fc;border:1px solid #b9c6da"></div>
<div class="t" style="left:1070px;top:212px;color:#6e7684">Search Flowers</div>
<svg class="a" style="left:1243px;top:214px" width="12" height="12"><use href="#mag" width="12" height="12"/></svg>
<svg class="a" style="left:1268px;top:222px" width="6" height="7"><use href="#ovf" width="6" height="7"/></svg>

<!-- folders (right) -->
<div class="hd" style="left:655px;top:234px;width:267px;height:27px"><span style="top:4px">Folders</span></div>
<svg class="a" style="left:873px;top:245px" width="9" height="5"><use href="#pdd" width="9" height="5"/></svg>
<svg class="a" style="left:890px;top:241px" width="8" height="10"><use href="#pin" width="8" height="10"/></svg>
<svg class="a" style="left:905px;top:242px" width="9" height="9"><use href="#x" width="9" height="9"/></svg>
<div class="wh" style="left:655px;top:261px;width:267px;height:152px"></div>
<div class="a" style="left:655px;top:324px;width:250px;height:21px;background:#f2f2f2;border:1px solid #e2e2e2"></div>
<svg class="a" style="left:724px;top:263px" width="14" height="17"><use href="#fold" width="14" height="17"/></svg><div class="t k" style="left:744px;top:264px">Wallpaper</div>
<svg class="a" style="left:734px;top:284px" width="14" height="17"><use href="#fold" width="14" height="17"/></svg><div class="t k" style="left:754px;top:285px">Architecture</div>
<svg class="a" style="left:734px;top:305px" width="14" height="17"><use href="#fold" width="14" height="17"/></svg><div class="t k" style="left:754px;top:306px">Characters</div>
<svg class="a" style="left:734px;top:326px" width="14" height="17"><use href="#fold" width="14" height="17"/></svg><div class="t k" style="left:754px;top:327px">Flowers</div>
<svg class="a" style="left:734px;top:347px" width="14" height="17"><use href="#fold" width="14" height="17"/></svg><div class="t k" style="left:754px;top:348px">Landscapes</div>
<svg class="a" style="left:734px;top:368px" width="14" height="17"><use href="#fold" width="14" height="17"/></svg><div class="t k" style="left:754px;top:369px">Lines and colors</div>
<svg class="a" style="left:734px;top:389px" width="14" height="17"><use href="#fold" width="14" height="17"/></svg><div class="t k" style="left:754px;top:390px">Nature</div>
<div class="a" style="left:735px;top:409px;width:12px;height:4px;background:linear-gradient(90deg,#fbeeb0,#f1d678)"></div>
<div class="a" style="left:906px;top:261px;width:16px;height:152px;background:#f0f0f0"></div>
<svg class="a" style="left:909px;top:266px" width="9" height="6"><use href="#sup" width="9" height="6"/></svg>
<div class="a" style="left:907px;top:369px;width:14px;height:17px;background:#cdcdcd"></div>
<svg class="a" style="left:909px;top:400px" width="9" height="6"><use href="#sdn" width="9" height="6"/></svg>
<!-- preview (right) -->
<div class="hd" style="left:655px;top:417px;width:267px;height:28px"><span style="top:4px">Preview</span></div>
<svg class="a" style="left:873px;top:429px" width="9" height="5"><use href="#pdd" width="9" height="5"/></svg>
<svg class="a" style="left:890px;top:425px" width="8" height="10"><use href="#pin" width="8" height="10"/></svg>
<svg class="a" style="left:905px;top:426px" width="9" height="9"><use href="#x" width="9" height="9"/></svg>
<div class="wh" style="left:655px;top:445px;width:267px;height:153px"></div>
<!-- ===== flower symbols ===== -->
<svg width="0" height="0" style="position:absolute"><defs>
<linearGradient id="f11bg" x1="0" y1="0" x2="1" y2="0"><stop offset="0" stop-color="#9ad480"/><stop offset=".3" stop-color="#bce6a2"/><stop offset=".6" stop-color="#e4f7d4"/><stop offset=".85" stop-color="#d6f2c2"/><stop offset="1" stop-color="#c2eaa8"/></linearGradient>
<linearGradient id="f11v" x1="0" y1="0" x2="0" y2="1"><stop offset="0" stop-color="#8ccc70" stop-opacity=".25"/><stop offset=".4" stop-color="#fff" stop-opacity="0"/><stop offset="1" stop-color="#f4fcec" stop-opacity=".5"/></linearGradient>
<symbol id="img11" viewBox="0 0 225 141" preserveAspectRatio="none">
<rect width="225" height="141" fill="url(#f11bg)"/><rect width="225" height="141" fill="url(#f11v)"/>
<ellipse cx="20" cy="10" rx="40" ry="30" fill="#8ccc70" opacity=".35" filter="url(#b4)"/>
<ellipse cx="130" cy="20" rx="30" ry="40" fill="#f0fbe4" opacity=".7" filter="url(#b4)"/>
<ellipse cx="90" cy="138" rx="50" ry="14" fill="#eefbe8" opacity=".8" filter="url(#b4)"/>
<g filter="url(#b1)">
<path d="M180 78c10-8 24-15 33-16 4 0 5 5 1 9-8 7-22 11-34 13z" fill="#fcbcb2"/>
<path d="M110 100c4-5 18-8 32-8l-2 12c-12 5-26 3-30-4z" fill="#fcc8be"/>
<path d="M98 123c12-8 36-16 62-18 2 6-2 14-12 20-16 8-38 8-50-2z" fill="#f98882"/>
<path d="M170 104c6-10 14-17 24-19 12 0 22 2 31 4v24c-18 2-40-1-55-9z" fill="#f98a84"/>
<path d="M160 108c6-2 14-1 19 1 2 10-1 20-7 26-8-5-13-16-12-27z" fill="#f66860"/>
<ellipse cx="159" cy="87" rx="23" ry="17" fill="#fde6dc"/>
<path d="M137 88c2 14 10 20 22 22 12-2 20-8 23-22-14 8-32 8-45 0z" fill="#fcd4c8"/>
<rect x="169.500" y="133" width="9.500" height="8" fill="#4c9a30"/>
</g>
<g filter="url(#b0)">
<path d="M158 82c-4-10-7-28-6-46 1-8 3-14 7-20" stroke="#ea7a86" stroke-width="4.600" fill="none" stroke-linecap="round"/>
<ellipse cx="159" cy="15" rx="5.200" ry="4.800" fill="#d6485a"/>
<ellipse cx="158" cy="55" rx="3.800" ry="6.500" fill="#e05866" transform="rotate(-15 158 55)"/>
<ellipse cx="143.500" cy="63" rx="3.800" ry="6.500" fill="#e05866" transform="rotate(-30 143.500 63)"/>
<ellipse cx="151" cy="70" rx="3.200" ry="5.500" fill="#e05866" transform="rotate(-20 151 70)"/>
<ellipse cx="163.500" cy="72" rx="3.200" ry="5.500" fill="#e05866" transform="rotate(25 163.500 72)"/>
<path d="M145 67l10 16M152 74l5 10M163 76l-4 10" stroke="#e46a74" stroke-width="2.400"/>
</g></symbol>

<radialGradient id="f7bg" cx=".7" cy=".6" r=".9"><stop offset="0" stop-color="#5cbcc6"/><stop offset=".6" stop-color="#36a0b0"/><stop offset="1" stop-color="#2a8494"/></radialGradient>
<symbol id="img7" viewBox="0 0 90 56" preserveAspectRatio="none">
<rect width="90" height="56" fill="#3296a8"/>
<ellipse cx="60" cy="36" rx="26" ry="18" fill="#74c2cc" opacity=".75" filter="url(#b4)"/>
<ellipse cx="6" cy="20" rx="16" ry="26" fill="#1f7a8e" opacity=".7" filter="url(#b4)"/>
<ellipse cx="34" cy="54" rx="14" ry="8" fill="#2a8496" opacity=".6" filter="url(#b4)"/>
<g filter="url(#b0)"><path d="M29 22l8-5 4-12.500 6 8 6-6.500 4-6h29l-2 4-8 5-6 5-6 4-8 3-9 4-7-1-6 0z" fill="#e0284a"/>
<path d="M58 0h22l-6 5-9 2-5-3z" fill="#a81030"/><path d="M41 5l5 8-3 6z" fill="#c41a40"/>
<path d="M40 20c6-1 14-5 22-12M46 22c6-2 12-6 18-11" stroke="#f4705c" stroke-width="1.600" fill="none"/>
<path d="M30 21.500l-3 2.500 5 .5z" fill="#d01c48"/>
<path d="M46.500 24c-.6 4-1.600 8-2.300 12" stroke="#f0506c" stroke-width="2" fill="none" stroke-linecap="round"/><path d="M44.600 32l-.6 5" stroke="#dc1c54" stroke-width="2.400" stroke-linecap="round"/></g>
</symbol>

<radialGradient id="f8bg" cx=".45" cy=".55" r=".8"><stop offset="0" stop-color="#fdf4f9"/><stop offset=".6" stop-color="#f8e2ee"/><stop offset="1" stop-color="#eeb8d6"/></radialGradient>
<symbol id="img8" viewBox="0 0 90 56" preserveAspectRatio="none">
<rect width="90" height="56" fill="#f9e6f1"/>
<ellipse cx="30" cy="24" rx="30" ry="18" fill="#fffbfd" opacity=".9" filter="url(#b4)"/>
<path d="M-5 60V42c22 8 46 12 78 16z" fill="#df88c2" opacity=".75" filter="url(#b4)"/>
<rect x="84" y="-10" width="16" height="76" fill="#f0c4de" opacity=".8" filter="url(#b4)"/>
<rect x="-10" y="-10" width="16" height="40" fill="#f4d0e6" opacity=".8" filter="url(#b4)"/>
<g filter="url(#b0)"><path d="M63.500 29c-11-1-25-6-33.500-15.500 2-1.500 6-.5 10 2 9 4 18 8 25 12z" fill="#f9b24a" opacity=".92"/><path d="M64.500 28c-8-5-17-14-21-23.500 3-.5 6 1.500 9 5 6 6 11 12 14 17z" fill="#fab650" opacity=".92"/><path d="M65.500 27c-5-8-9-18-8.500-27h6c3.500 8 5 18 4.500 26.500z" fill="#f9a834" opacity=".95"/><path d="M67 27c0-9 2-19 5-27h2.500c.5 9-1.500 19-5.500 27.500z" fill="#f8aa3a" opacity=".92"/><path d="M68.500 28c3-8 6.500-17 10.500-24.500 1 9-3 19-9 25.500z" fill="#fbc470" opacity=".8"/><path d="M62.500 29.500c-10 0-22 1-32.500 4.300 11 .8 23-.3 33-2.300z" fill="#f7b460" opacity=".85"/>
<path d="M59.500 27.500c2-2 8.500-2 10.500 0-.5 3.500-2 5.500-5.500 5.500s-4.500-2-5-5.500z" fill="#7c3878"/><path d="M65.500 32c1 8 3 16 5.500 24" stroke="#c08c5c" stroke-width="1.600" fill="none"/></g>
</symbol>

<linearGradient id="f9bg" x1="0" y1="0" x2="1" y2="0"><stop offset="0" stop-color="#8ccca4"/><stop offset=".3" stop-color="#eef6ee"/><stop offset=".5" stop-color="#e4f2e6"/><stop offset=".75" stop-color="#a4dab8"/><stop offset=".88" stop-color="#82cc9c"/><stop offset="1" stop-color="#a0d8b4"/></linearGradient>
<symbol id="img9" viewBox="0 0 90 28" preserveAspectRatio="none">
<rect width="90" height="28" fill="url(#f9bg)"/>
<g filter="url(#b0)"><path d="M57.500 16c2.500 3.500 5 7.500 7 12" stroke="#c46c90" stroke-width="1.700" fill="none"/><ellipse cx="55.400" cy="7" rx="2.600" ry="4.200" transform="rotate(0 55.400 11.500)" fill="#e23a9e"/><ellipse cx="55.400" cy="7" rx="2.600" ry="4.200" transform="rotate(51 55.400 11.500)" fill="#e23a9e"/><ellipse cx="55.400" cy="7" rx="2.600" ry="4.200" transform="rotate(102 55.400 11.500)" fill="#e23a9e"/><ellipse cx="55.400" cy="7" rx="2.600" ry="4.200" transform="rotate(153 55.400 11.500)" fill="#e23a9e"/><ellipse cx="55.400" cy="7" rx="2.600" ry="4.200" transform="rotate(204 55.400 11.500)" fill="#e23a9e"/><ellipse cx="55.400" cy="7" rx="2.600" ry="4.200" transform="rotate(255 55.400 11.500)" fill="#e23a9e"/><ellipse cx="55.400" cy="7" rx="2.600" ry="4.200" transform="rotate(306 55.400 11.500)" fill="#e23a9e"/><ellipse cx="55.400" cy="7" rx="2.600" ry="4.200" transform="rotate(357 55.400 11.500)" fill="#e23a9e"/><circle cx="55.400" cy="11.500" r="2.400" fill="#8c1858"/></g>
</symbol>

<radialGradient id="f10a" cx=".78" cy=".6" r=".5"><stop offset="0" stop-color="#b8600c"/><stop offset=".6" stop-color="#70400c" stop-opacity=".7"/><stop offset="1" stop-color="#3a2408" stop-opacity="0"/></radialGradient>
<symbol id="img10" viewBox="0 0 90 56" preserveAspectRatio="none">
<rect width="90" height="56" fill="#3a3014"/>
<ellipse cx="6" cy="2" rx="18" ry="8" fill="#4a98a8" filter="url(#b4)"/>
<ellipse cx="30" cy="12" rx="24" ry="10" fill="#5c5020" opacity=".9" filter="url(#b4)"/>
<ellipse cx="68" cy="34" rx="22" ry="16" fill="#b05c0c" filter="url(#b4)"/>
<ellipse cx="84" cy="10" rx="10" ry="12" fill="#1c2814" opacity=".8" filter="url(#b4)"/>
<ellipse cx="14" cy="46" rx="22" ry="12" fill="#100c06" opacity=".85" filter="url(#b4)"/>
<rect y="48" width="90" height="8" fill="#0c0804" opacity=".7" filter="url(#b2)"/>
<g filter="url(#b0)"><path d="M64.500 29v27M30.500 45v11" stroke="#2a1408" stroke-width="1.300"/><path d="M42 38c3 5 6 11 8 18" stroke="#2c3818" stroke-width="1.200" fill="none"/>
<path d="M53 12c3 3 5 5 6.500 8 .5-5 1-9 1.500-13.500 2 3 3.500 6 4.500 9.500 1.500-4 3-7 5.500-9.500.5 9-1 18-7 22.500-6-2-10-9-11-17z" fill="#f04a18"/><path d="M61 8c1 7 1 14-.5 20" stroke="#c82808" stroke-width="1.500" fill="none"/>
<path d="M24.500 28c1.500 2 2.500 4 3.500 6 .5-3 1.500-7 2.500-10 1.500 3 2.500 6 3 9 1-2 2-4 3.500-5.500.5 8-1 15-6 18.500-5-3-7-10-6.500-18z" fill="#e83a14"/><path d="M30.500 26c.8 6 .6 13-.4 19" stroke="#f86038" stroke-width="1.200" fill="none"/></g>
</symbol>

<linearGradient id="f12bg" x1="0" y1="0" x2="0" y2="1"><stop offset="0" stop-color="#d4e040"/><stop offset=".35" stop-color="#e6ee88"/><stop offset=".6" stop-color="#d8ec90"/><stop offset=".8" stop-color="#8ed038"/><stop offset="1" stop-color="#5cb41c"/></linearGradient>
<linearGradient id="f12h" x1="0" y1="0" x2="1" y2="0"><stop offset="0" stop-color="#b8cc20" stop-opacity=".7"/><stop offset=".35" stop-color="#f0f2a0" stop-opacity="0"/><stop offset="1" stop-color="#e8f0c0" stop-opacity=".4"/></linearGradient>
<symbol id="img12" viewBox="0 0 90 56" preserveAspectRatio="none">
<rect width="90" height="56" fill="url(#f12bg)"/><rect width="90" height="56" fill="url(#f12h)"/>
<g filter="url(#b0)"><path d="M61 2c-6 6-9 14-9 24 0 4 1 6 3 7 1 8 5 14 10.500 18 2-8 3-18 2-28-1-8-3-15-7.500-21z" fill="#4ea42c"/><path d="M78 .5c-5 6-8 15-7.500 25 .3 7 2 12 5 16.500 5-6 8-14 9-23 .6-7-1-14-6.500-18.500z" fill="#56ac30"/>
<path d="M61 4c1 16 2 32 4.500 46M78 2c-2 13-3 27-2.500 39" stroke="#2c7c1c" stroke-width=".9" fill="none"/>
<path d="M55 14l7 4M54 22l8 4M55 30l8 4M58 38l6 3M72 12l5 3M71 20l5.500 3M72 28l4.500 2" stroke="#3c9024" stroke-width=".7"/></g>
</symbol>
</defs></svg>

<!-- right preview image -->
<svg class="th" style="left:673px;top:449px" width="225" height="141"><use href="#img11" width="225" height="141"/></svg>

<!-- ===== right file list ===== -->
<div class="wh" style="left:926px;top:233px;width:351px;height:307px"></div>
<div class="col" style="left:1005px;top:235px;height:20px"></div>
<div class="col" style="left:1085px;top:235px;height:20px"></div>
<div class="col" style="left:1165px;top:235px;height:20px"></div>
<div class="col" style="left:1245px;top:235px;height:20px"></div>
<div class="t k" style="left:932px;top:237px;font-size:12px">Name</div>
<svg class="a" style="left:962px;top:234px" width="8" height="4" viewBox="0 0 8 4"><path d="M.5 3.800L4 .6 7.500 3.800z" fill="#bcd2ee" stroke="#7a9cd0" stroke-width=".8"/></svg>
<div class="t k" style="left:1012px;top:237px;font-size:12px">Date</div>
<div class="t k" style="left:1092px;top:237px;font-size:12px">Type</div>
<div class="t k" style="left:1172px;top:237px;font-size:12px">Size</div>
<div class="t" style="left:1267px;top:237px;color:#333;font-size:13px">»</div>
<svg class="th" style="left:936px;top:300px" width="90" height="56"><use href="#img7" width="90" height="56"/></svg>
<svg class="th" style="left:1041px;top:300px" width="91" height="56"><use href="#img8" width="91" height="56"/></svg>
<svg class="th" style="left:1146px;top:328px" width="91" height="28"><use href="#img9" width="91" height="28"/></svg>
<div class="t c k" style="left:931px;top:363px;width:100px;font-size:12px">img7.jpg</div>
<div class="t c k" style="left:1036px;top:363px;width:100px;font-size:12px">img8.jpg</div>
<div class="t c k" style="left:1141px;top:363px;width:100px;font-size:12px">img9.jpg</div>
<div class="a" style="left:1035px;top:410px;width:104px;height:118px;background:#cce8f7;border:1px dotted #10243c"></div>
<svg class="th" style="left:936px;top:448px" width="90" height="56"><use href="#img10" width="90" height="56"/></svg>
<svg class="th" style="left:1041px;top:448px" width="91" height="56"><use href="#img11" width="91" height="56"/></svg>
<svg class="th" style="left:1146px;top:448px" width="91" height="56"><use href="#img12" width="91" height="56"/></svg>
<div class="t c k" style="left:931px;top:511px;width:100px;font-size:12px">img10.jpg</div>
<div class="t c k" style="left:1036px;top:511px;width:100px;font-size:12px">img11.jpg</div>
<div class="t c k" style="left:1141px;top:511px;width:100px;font-size:12px">img12.jpg</div>
<div class="a" style="left:926px;top:539px;width:351px;height:59px;background:#eef2fb;border-top:1px solid #d3deef"></div>
<svg class="th" style="left:946px;top:545px" width="72" height="45"><use href="#img11" width="72" height="45"/></svg>
<div class="t k" style="left:1040px;top:546px;font-size:14px;line-height:18px;height:18px">img11.jpg</div>
<div class="t" style="left:1040px;top:565px;font-size:11px;color:#6d6d6d">JPEG image</div>
<!-- right status -->
<div class="wh" style="left:655px;top:598px;width:622px;height:23px;background:#fdfdfe"></div>
<div class="t" style="left:668px;top:602px">6 items</div>
<div class="col" style="left:716px;top:605px;height:10px;background:#e3e6ec"></div>
<div class="t" style="left:727px;top:602px">1 item selected&nbsp; 75.9 KB</div>
<div class="col" style="left:861px;top:605px;height:10px;background:#e3e6ec"></div>
<svg class="a" style="left:1232px;top:602px" width="16" height="14" viewBox="0 0 16 14"><g fill="none" stroke="#5a5f6a" stroke-width="1"><rect x=".5" y=".5" width="3" height="3"/><rect x=".5" y="5.500" width="3" height="3"/><rect x=".5" y="10.500" width="3" height="3"/><path d="M6 2h9M6 7h9M6 12h9" stroke-dasharray="3.500 1.500"/></g></svg>
<div class="a" style="left:1251px;top:598px;width:22px;height:23px;background:#cfe8fa;border:1px solid #2f9ae0"></div>
<div class="a" style="left:1256px;top:604px;width:13px;height:11px;background:#fff;border:1px solid #555"></div>
<div class="a" style="left:1258px;top:606px;width:9px;height:7px;background:linear-gradient(#7fb8e8 50%,#2a5a30 50%)"></div>
<!-- ===== bottom transfer queue ===== -->
<div class="a" style="left:2px;top:627px;width:1282px;height:176px;background:#dde7f4;border-top:4px solid #c3d3ea"></div>
<div class="a" style="left:4px;top:631px;width:28px;height:172px;background:linear-gradient(90deg,#dde7f4 10%,#c9d8ee 55%,#a9c0e2)"></div>
<div class="a" style="left:28px;top:637px;font-size:14.600px;color:#2b4a78;writing-mode:vertical-rl;line-height:18px;width:18px;white-space:nowrap;transform:translateX(-18px)">Transfer Queue</div>
<svg class="a" style="left:13px;top:757px" width="9" height="5"><use href="#pdd" width="9" height="5"/></svg>
<svg class="a" style="left:14px;top:770px" width="8" height="10"><use href="#pin" width="8" height="10"/></svg>
<svg class="a" style="left:13px;top:786px" width="9" height="9"><use href="#x" width="9" height="9"/></svg>
<div class="a" style="left:32px;top:631px;width:1250px;height:26px;background:linear-gradient(#f8fafd,#e6edf8);border-bottom:1px solid #c0cee2"></div>
<svg class="a" style="left:38px;top:636px" width="3" height="16"><use href="#grip" width="3" height="16"/></svg>
<!-- toolbar icons -->
<svg class="a" style="left:46px;top:635px" width="16" height="17" viewBox="0 0 16 17"><path d="M.5 1.500h10l3 3v11H.5z" fill="#d6dde8" stroke="#b4bfd0"/><path d="M6.500 1.500v14" stroke="#c0cada"/><path d="M13 4.500l-6 5M7 6v4h4" stroke="#aab6ca" stroke-width="1.600" fill="none"/></svg>
<svg class="a" style="left:66px;top:634px" width="17" height="18" viewBox="0 0 17 18"><path d="M1.500 4.500h8l3 3v9h-11z" fill="#fff" stroke="#6f7580"/><path d="M3 8.500h6M3 10.500h7M3 12.500h7M3 14.500h7" stroke="#9aa0aa"/><circle cx="12" cy="4.500" r="4" fill="#2eaa3a"/><path d="M12 2v5M9.500 4.500h5" stroke="#fff" stroke-width="1.500"/></svg>
<svg class="a" style="left:89px;top:636px" width="16" height="16" viewBox="0 0 16 16"><rect x="1" y="1" width="14" height="14" fill="#7c58b8" stroke="#5a3898"/><rect x="3.500" y="1.500" width="9" height="6" fill="#f4f2f8"/><rect x="4" y="9.500" width="8" height="5.500" fill="#c4c4cc"/><rect x="5" y="10.500" width="2.500" height="3.500" fill="#5a3898"/></svg>
<svg class="a" style="left:110px;top:642px" width="6" height="3"><use href="#dd" width="6" height="3"/></svg>
<div class="sep" style="left:122px;top:636px;height:16px"></div>
<svg class="a" style="left:130px;top:636px" width="14" height="16" viewBox="0 0 14 16"><path d="M1.500 1.500L12.500 8 1.500 14.500z" fill="#d3d9e3" stroke="#b0b8c6"/></svg>
<div class="a" style="left:153px;top:636px;width:5px;height:15px;background:linear-gradient(90deg,#f8c030,#e89a10)"></div>
<div class="a" style="left:160px;top:636px;width:5px;height:15px;background:linear-gradient(90deg,#f8c030,#e89a10)"></div>
<div class="a" style="left:174px;top:637px;width:14px;height:14px;background:linear-gradient(#f05a50,#d82a28);border:1px solid #c0201c;border-radius:1px"></div>
<div class="sep" style="left:194px;top:636px;height:16px"></div>
<svg class="a" style="left:200px;top:636px" width="17" height="16" viewBox="0 0 17 16"><path d="M2 2l13 12M15 2L2 14" stroke="#8c96a8" stroke-width="2.400"/></svg>
<div class="sep" style="left:223px;top:636px;height:16px"></div>
<svg class="a" style="left:229px;top:636px" width="16" height="16" viewBox="0 0 16 16"><rect x="1.500" y="1.500" width="9" height="10" fill="#e6e9ee" stroke="#b4bac6"/><rect x="5.500" y="4.500" width="9" height="10" fill="#eef0f4" stroke="#b4bac6"/></svg>
<svg class="a" style="left:250px;top:642px" width="6" height="3"><use href="#ddg" width="6" height="3"/></svg>
<div class="sep" style="left:262px;top:636px;height:16px"></div>
<svg class="a" style="left:270px;top:636px" width="16" height="16" viewBox="0 0 16 16"><path d="M4 1H1v14h3M12 1h3v14h-3" stroke="#2a6ac0" stroke-width="1.400" fill="none"/><rect x="4.500" y="4.500" width="7" height="7" fill="#e8f0fa" stroke="#2a6ac0"/></svg>
<svg class="a" style="left:290px;top:642px" width="6" height="3"><use href="#dd" width="6" height="3"/></svg>
<svg class="a" style="left:303px;top:636px" width="16" height="16" viewBox="0 0 16 16"><circle cx="8" cy="8" r="6.500" fill="#f2f2f2" stroke="#6a6e76" stroke-width="1.600"/><path d="M8 4v4.500h3" stroke="#555" stroke-width="1.300" fill="none"/></svg>
<svg class="a" style="left:326px;top:636px" width="16" height="16" viewBox="0 0 16 16"><path d="M2 5v6M5.500 2v12M9 4v8M12.500 6v4" stroke="#1e5cb0" stroke-width="2"/><path d="M5 12l3 3 5-5" stroke="#2ea83a" stroke-width="2" fill="none"/></svg>
<svg class="a" style="left:342px;top:642px" width="6" height="3"><use href="#dd" width="6" height="3"/></svg>
<div class="t" style="left:353px;top:636px">Workers</div>
<div class="a" style="left:399px;top:633px;width:43px;height:22px;background:#fff;border:1px solid #b9c6da"></div>
<div class="t" style="left:414px;top:636px">1</div>
<svg class="a" style="left:429px;top:639px" width="6" height="3" viewBox="0 0 7 4"><path d="M0 4L3.500 0 7 4z" fill="#222"/></svg>
<svg class="a" style="left:429px;top:646px" width="6" height="3" viewBox="0 0 7 4"><path d="M0 0L3.500 4 7 0z" fill="#222"/></svg>
<svg class="a" style="left:1271px;top:646px" width="6" height="7"><use href="#ovf" width="6" height="7"/></svg>
<!-- table -->
<div class="wh" style="left:32px;top:657px;width:1250px;height:100px"></div>
<div class="a" style="left:32px;top:681px;width:1250px;height:76px;background:repeating-linear-gradient(#fff 0,#fff 18px,#edf1f7 18px,#edf1f7 19px)"></div>
<div class="a" style="left:32px;top:680px;width:1250px;height:1px;background:#e3e9f2"></div>
<div class="col" style="left:151px;top:658px;height:99px"></div>
<div class="col" style="left:271px;top:658px;height:99px"></div>
<div class="col" style="left:391px;top:658px;height:99px"></div>
<div class="col" style="left:511px;top:658px;height:99px"></div>
<div class="col" style="left:631px;top:658px;height:99px"></div>
<div class="col" style="left:751px;top:658px;height:99px"></div>
<div class="col" style="left:871px;top:658px;height:99px"></div>
<div class="col" style="left:991px;top:658px;height:99px"></div>
<div class="col" style="left:1111px;top:658px;height:99px"></div>
<div class="col" style="left:1231px;top:658px;height:99px"></div>
<div class="t k" style="left:38px;top:661px">Name</div>
<div class="t k" style="left:158px;top:661px">Operation</div>
<div class="t r k" style="left:286px;top:661px;width:100px">Size</div>
<div class="t k" style="left:398px;top:661px">Source</div>
<div class="t k" style="left:518px;top:661px">Destination</div>
<div class="t k" style="left:638px;top:661px">Status</div>
<div class="t r k" style="left:766px;top:661px;width:100px">Average speed</div>
<div class="t r k" style="left:886px;top:661px;width:100px">Current speed</div>
<div class="t r k" style="left:1006px;top:661px;width:100px">Elapsed</div>
<div class="t r k" style="left:1126px;top:661px;width:100px">Left</div>
<!-- status strip -->
<div class="a" style="left:32px;top:757px;width:1250px;height:24px;background:linear-gradient(#d6e1f0,#b6c8e2);border-top:1px solid #7a90b6;border-bottom:1px solid #7ba0e0"></div>
<div class="t" style="left:36px;top:761px">Idle</div>
<div class="t" style="left:444px;top:761px">C:\User...\Transfer Queue.xml</div>
<div class="sep" style="left:683px;top:759px;height:20px;background:#b3c2da;box-shadow:1px 0 0 #f2f6fc"></div>
<div class="sep" style="left:779px;top:759px;height:20px;background:#b3c2da;box-shadow:1px 0 0 #f2f6fc"></div>
<div class="sep" style="left:872px;top:759px;height:20px;background:#b3c2da;box-shadow:1px 0 0 #f2f6fc"></div>
<div class="sep" style="left:1010px;top:759px;height:20px;background:#b3c2da;box-shadow:1px 0 0 #f2f6fc"></div>
<div class="sep" style="left:1140px;top:759px;height:20px;background:#b3c2da;box-shadow:1px 0 0 #f2f6fc"></div>
<div class="t" style="left:688px;top:761px">Items: 0</div>
<div class="t" style="left:784px;top:761px">Total: 0 bytes</div>
<div class="t" style="left:878px;top:761px">Transferred: 0 bytes</div>
<div class="t" style="left:1015px;top:761px">In Speed: 0 bytes/s</div>
<div class="t" style="left:1146px;top:761px">Out Speed: 0 bytes/s</div>
<!-- bottom tabs -->
<div class="a" style="left:38px;top:780px;width:94px;height:22px;background:#fbfcfe;border:1px solid #b5c3d8;border-top:none;border-radius:0 0 3px 3px"></div>
<div class="t" style="left:44px;top:783px;font-size:11.700px">Transfer Queue</div>
<div class="t" style="left:141px;top:783px;font-size:11.700px">Scheduler</div>
<div class="t" style="left:209px;top:783px;font-size:11.700px">Speed</div>
<div class="t" style="left:257px;top:783px;font-size:11.700px">Multi upload</div>

<!-- ===== QAT icons & watermarks ===== -->
<svg class="a" style="left:6px;top:8px" width="16" height="16" viewBox="0 0 16 16"><circle cx="8" cy="9" r="5.500" fill="#3a7ad0"/><path d="M5 7c2-2 5-1 5 1s-3 4-5 3z" fill="#2e8a3a"/><path d="M1 13C5 6 10 3 15 2" stroke="#e02020" stroke-width="2" fill="none"/></svg>
<div class="a" style="left:28px;top:10px;width:1px;height:13px;background:#333"></div>
<svg class="a" style="left:35px;top:7px" width="18" height="16" viewBox="0 0 18 16"><circle cx="6" cy="6.500" r="5.500" fill="#1e5ad0"/><path d="M3 4c2-2 5-1 4 1s-3 2-4 1zM5 9c2 0 3 1 2 3" fill="#38c048" stroke="#38c048"/><rect x="8" y="6" width="8" height="7" fill="#0a18b0" stroke="#c8d0e8" stroke-width=".6"/></svg>
<svg class="a" style="left:58px;top:9px" width="17" height="15" viewBox="0 0 17 15"><path d="M.5 2.500h6l1 1.500h9v10.500H.5z" fill="#f0d068" stroke="#c8a030"/><path d="M4 8h9v6H4z" fill="#4aa8e0"/><rect x="7" y="10" width="3" height="4" fill="#e8c040"/></svg>
<svg class="a" style="left:81px;top:8px" width="14" height="16" viewBox="0 0 14 16"><path d="M.5 .5h9l4 4v11H.5z" fill="#fff" stroke="#888"/><path d="M2 4.500h9M2 6.500h10M2 8.500h10M2 10.500h10M2 12.500h10" stroke="#999"/></svg>
<div class="a" style="left:101px;top:9px;width:1px;height:14px;background:#f4f6fa"></div>
<svg class="a" style="left:108px;top:8px" width="14" height="17"><use href="#fold" width="14" height="17"/></svg>
<svg class="a" style="left:176px;top:8px" width="16" height="15" viewBox="0 0 16 15"><path d="M1 2c4 3 8 7 12 12" stroke="#d5261c" stroke-width="2.800" stroke-linecap="round" fill="none"/><path d="M14 1C9 5 5 9 3 14" stroke="#dc2e22" stroke-width="2.800" stroke-linecap="round" fill="none"/></svg>
<svg class="a" style="left:197px;top:8px" width="17" height="17" viewBox="0 0 17 17"><path d="M1.500 1.500h8l3.500 3.500v10.500h-11.500z" fill="#fff" stroke="#999"/><path d="M6 11l3 4c1-4 4-7 7-9" stroke="#f0733a" stroke-width="2.400" fill="none"/></svg>
<svg class="a" style="left:219px;top:10px" width="17" height="13" viewBox="0 0 17 13"><rect x=".8" y="3.500" width="14" height="6" fill="#fff" stroke="#2a6fc9" stroke-width="1.200"/><rect x="2.500" y="5" width="7" height="3" fill="#3c8be0"/><path d="M10 1c2 0 2.500.5 2.500 1.500v8c0 1-.5 1.500-2.500 1.500M15 1c-2 0-2.500.5-2.500 1.500v8c0 1 .5 1.500 2.500 1.500" stroke="#777" stroke-width="1" fill="none"/></svg>
<svg class="a" style="left:241px;top:13px" width="7" height="8"><use href="#ovf" width="7" height="8"/></svg>
<div class="wm" style="left:0px;top:-1px">programy.net.<span>pl</span></div>
<div class="wm" style="left:543px;top:385px">programy.net.<span>pl</span></div>
<div class="wm" style="left:1085px;top:771px;color:#a9acb3;-webkit-text-stroke-color:#a9acb3">programy.net.<span style="color:#8fb4e8;-webkit-text-stroke-color:#8fb4e8">pl</span></div>
</body></html>
